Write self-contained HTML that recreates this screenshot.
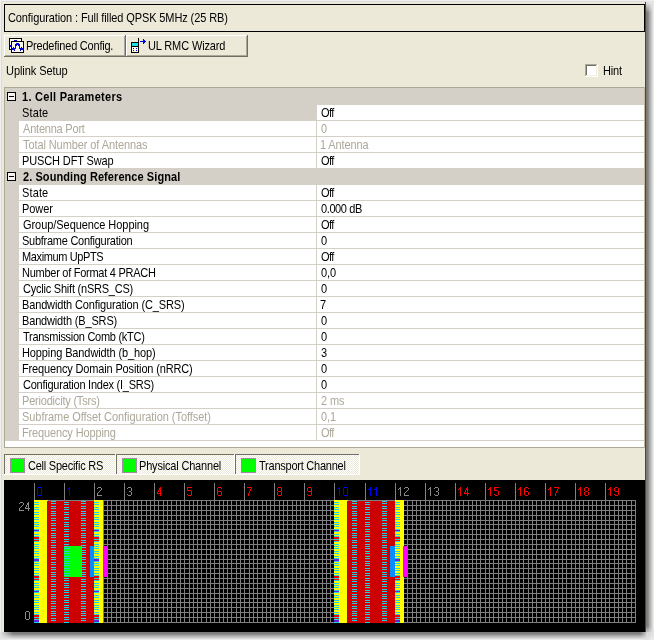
<!DOCTYPE html>
<html><head><meta charset="utf-8"><style>
html,body{margin:0;padding:0;width:654px;height:640px;overflow:hidden;position:relative;background:#fff}
.t{position:absolute;font-family:"Liberation Sans", sans-serif;font-size:11px;line-height:16px;white-space:nowrap;transform-origin:0 0;will-change:transform;transform:scaleY(1.09)}
</style></head><body>
<div style="position:absolute;left:0px;top:0px;width:654px;height:640px;background:#ffffff"></div><div style="position:absolute;left:0px;top:0px;width:646px;height:1px;background:#efefef"></div><div style="position:absolute;left:0px;top:1px;width:646px;height:1px;background:#dcdcdc"></div><div style="position:absolute;left:0px;top:0px;width:1px;height:632px;background:#efefef"></div><div style="position:absolute;left:1px;top:1px;width:1px;height:631px;background:#dcdcdc"></div><div style="position:absolute;left:2px;top:2px;width:643px;height:630px;background:#ece9d8"></div><div style="position:absolute;left:645px;top:2px;width:1px;height:630px;background:#0a46f0"></div><div style="position:absolute;left:646px;top:2px;width:1px;height:630px;background:#7c7a72"></div><div style="position:absolute;left:0px;top:632px;width:646px;height:1px;background:#7c7c7c"></div><div style="position:absolute;left:647px;top:2px;width:1px;height:630px;background:#808080"></div><div style="position:absolute;left:0px;top:633px;width:646px;height:1px;background:#808080"></div><div style="position:absolute;left:648px;top:2px;width:1px;height:630px;background:#8e8e8e"></div><div style="position:absolute;left:0px;top:634px;width:646px;height:1px;background:#8e8e8e"></div><div style="position:absolute;left:649px;top:2px;width:1px;height:630px;background:#a6a6a6"></div><div style="position:absolute;left:0px;top:635px;width:646px;height:1px;background:#a6a6a6"></div><div style="position:absolute;left:650px;top:2px;width:1px;height:630px;background:#b8b8b8"></div><div style="position:absolute;left:0px;top:636px;width:646px;height:1px;background:#b8b8b8"></div><div style="position:absolute;left:651px;top:2px;width:1px;height:630px;background:#c8c8c8"></div><div style="position:absolute;left:0px;top:637px;width:646px;height:1px;background:#c8c8c8"></div><div style="position:absolute;left:652px;top:2px;width:1px;height:630px;background:#dadada"></div><div style="position:absolute;left:0px;top:638px;width:646px;height:1px;background:#dadada"></div><div style="position:absolute;left:653px;top:2px;width:1px;height:630px;background:#ececec"></div><div style="position:absolute;left:0px;top:639px;width:646px;height:1px;background:#ececec"></div><div style="position:absolute;left:646px;top:2px;width:8px;height:11px;background:linear-gradient(to bottom,#e6e6e6,rgba(230,230,230,0))"></div><div style="position:absolute;left:0px;top:632px;width:13px;height:8px;background:linear-gradient(to right,#e6e6e6,rgba(230,230,230,0))"></div><div style="position:absolute;left:646px;top:626px;width:8px;height:6px;background:linear-gradient(to bottom,rgba(222,222,222,0),rgba(222,222,222,0.7))"></div><div style="position:absolute;left:640px;top:632px;width:6px;height:8px;background:linear-gradient(to right,rgba(222,222,222,0),rgba(222,222,222,0.7))"></div><div style="position:absolute;left:646px;top:632px;width:8px;height:8px;background:radial-gradient(circle at 0 0,#d4d4d4 0px,#e0e0e0 6px,#efefef 11px)"></div><div style="position:absolute;left:646px;top:0px;width:8px;height:1px;background:#eeeeee"></div><div style="position:absolute;left:646px;top:1px;width:8px;height:1px;background:#e4e4e4"></div><div style="position:absolute;left:4px;top:4px;width:641px;height:1px;background:#000"></div><div style="position:absolute;left:4px;top:31px;width:641px;height:1px;background:#000"></div><div style="position:absolute;left:4px;top:4px;width:1px;height:28px;background:#000"></div><div style="position:absolute;left:644px;top:4px;width:1px;height:28px;background:#000"></div><div class="t" style="left:8px;top:8.92px;color:#000;font-weight:normal;letter-spacing:-0.102px">Configuration : Full filled QPSK 5MHz (25 RB)</div><div style="position:absolute;left:4px;top:35px;width:122px;height:1px;background:#ffffff"></div><div style="position:absolute;left:4px;top:35px;width:1px;height:22px;background:#ffffff"></div><div style="position:absolute;left:4px;top:56px;width:122px;height:1px;background:#716f64"></div><div style="position:absolute;left:125px;top:35px;width:1px;height:22px;background:#716f64"></div><div style="position:absolute;left:5px;top:55px;width:120px;height:1px;background:#aca899"></div><div style="position:absolute;left:124px;top:36px;width:1px;height:20px;background:#aca899"></div><div style="position:absolute;left:126px;top:35px;width:122px;height:1px;background:#ffffff"></div><div style="position:absolute;left:126px;top:35px;width:1px;height:22px;background:#ffffff"></div><div style="position:absolute;left:126px;top:56px;width:122px;height:1px;background:#716f64"></div><div style="position:absolute;left:247px;top:35px;width:1px;height:22px;background:#716f64"></div><div style="position:absolute;left:127px;top:55px;width:120px;height:1px;background:#aca899"></div><div style="position:absolute;left:246px;top:36px;width:1px;height:20px;background:#aca899"></div><div class="t" style="left:26px;top:36.92px;color:#000;font-weight:normal;letter-spacing:-0.218px">Predefined Config.</div><div class="t" style="left:148px;top:36.92px;color:#000;font-weight:normal;letter-spacing:-0.133px">UL RMC Wizard</div><svg style="position:absolute;left:8px;top:37px" width="17" height="17" shape-rendering="crispEdges"><rect x="1" y="1" width="13" height="12" fill="#fbf7ea"/><rect x="1" y="1" width="13" height="1" fill="#000000"/><rect x="1" y="12" width="13" height="1" fill="#000000"/><rect x="1" y="1" width="1" height="12" fill="#000000"/><rect x="13" y="1" width="1" height="12" fill="#000000"/><rect x="6" y="3" width="1" height="1" fill="#0000e0"/><rect x="7" y="3" width="1" height="1" fill="#0000e0"/><rect x="8" y="3" width="1" height="1" fill="#0000e0"/><rect x="2" y="8" width="1" height="1" fill="#0000e0"/><rect x="2" y="9" width="1" height="1" fill="#0000e0"/><rect x="3" y="4" width="13" height="12" fill="#fbf7ea"/><rect x="3" y="4" width="13" height="1" fill="#000000"/><rect x="3" y="15" width="13" height="1" fill="#000000"/><rect x="3" y="4" width="1" height="12" fill="#000000"/><rect x="15" y="4" width="1" height="12" fill="#000000"/><rect x="8" y="6" width="1" height="1" fill="#0000e0"/><rect x="9" y="6" width="1" height="1" fill="#0000e0"/><rect x="10" y="6" width="1" height="1" fill="#0000e0"/><rect x="7" y="7" width="1" height="1" fill="#0000e0"/><rect x="8" y="7" width="1" height="1" fill="#0000e0"/><rect x="9" y="7" width="1" height="1" fill="#0000e0"/><rect x="10" y="7" width="1" height="1" fill="#0000e0"/><rect x="11" y="7" width="1" height="1" fill="#0000e0"/><rect x="7" y="8" width="1" height="1" fill="#0000e0"/><rect x="8" y="8" width="1" height="1" fill="#0000e0"/><rect x="10" y="8" width="1" height="1" fill="#0000e0"/><rect x="11" y="8" width="1" height="1" fill="#0000e0"/><rect x="7" y="9" width="1" height="1" fill="#0000e0"/><rect x="11" y="9" width="1" height="1" fill="#0000e0"/><rect x="7" y="10" width="1" height="1" fill="#0000e0"/><rect x="11" y="10" width="1" height="1" fill="#0000e0"/><rect x="5" y="10" width="1" height="1" fill="#0000e0"/><rect x="13" y="10" width="1" height="1" fill="#0000e0"/><rect x="4" y="11" width="1" height="1" fill="#0000e0"/><rect x="5" y="11" width="1" height="1" fill="#0000e0"/><rect x="6" y="11" width="1" height="1" fill="#0000e0"/><rect x="7" y="11" width="1" height="1" fill="#0000e0"/><rect x="11" y="11" width="1" height="1" fill="#0000e0"/><rect x="12" y="11" width="1" height="1" fill="#0000e0"/><rect x="13" y="11" width="1" height="1" fill="#0000e0"/><rect x="14" y="11" width="1" height="1" fill="#0000e0"/><rect x="4" y="12" width="1" height="1" fill="#0000e0"/><rect x="5" y="12" width="1" height="1" fill="#0000e0"/><rect x="6" y="12" width="1" height="1" fill="#0000e0"/><rect x="12" y="12" width="1" height="1" fill="#0000e0"/><rect x="13" y="12" width="1" height="1" fill="#0000e0"/><rect x="14" y="12" width="1" height="1" fill="#0000e0"/><rect x="6" y="13" width="1" height="1" fill="#0000e0"/><rect x="12" y="13" width="1" height="1" fill="#0000e0"/></svg><svg style="position:absolute;left:128px;top:36px" width="20" height="20" shape-rendering="crispEdges"><rect x="3" y="6" width="8" height="11" fill="#000000"/><rect x="4" y="7" width="6" height="3" fill="#1ce0e0"/><rect x="4" y="11" width="6" height="5" fill="#fbf7ea"/><rect x="5" y="12" width="1" height="1" fill="#0000e0"/><rect x="8" y="12" width="1" height="1" fill="#0000e0"/><rect x="5" y="14" width="1" height="1" fill="#0000e0"/><rect x="8" y="14" width="1" height="1" fill="#0000e0"/><rect x="10" y="2" width="1" height="4" fill="#000000"/><rect x="12" y="5" width="5" height="1" fill="#0000e0"/><rect x="15" y="3" width="1" height="1" fill="#0000e0"/><rect x="15" y="4" width="1" height="1" fill="#0000e0"/><rect x="16" y="4" width="1" height="1" fill="#0000e0"/><rect x="15" y="5" width="1" height="1" fill="#0000e0"/><rect x="16" y="5" width="1" height="1" fill="#0000e0"/><rect x="17" y="5" width="1" height="1" fill="#0000e0"/><rect x="15" y="6" width="1" height="1" fill="#0000e0"/><rect x="16" y="6" width="1" height="1" fill="#0000e0"/><rect x="15" y="7" width="1" height="1" fill="#0000e0"/><rect x="14" y="5" width="1" height="1" fill="#0000e0"/></svg><div class="t" style="left:6px;top:61.92px;color:#000;font-weight:normal;letter-spacing:-0.064px">Uplink Setup</div><div style="position:absolute;left:585px;top:64px;width:13px;height:13px;background:#ffffff"></div><div style="position:absolute;left:585px;top:64px;width:12px;height:1px;background:#aca899"></div><div style="position:absolute;left:585px;top:64px;width:1px;height:12px;background:#aca899"></div><div style="position:absolute;left:586px;top:65px;width:10px;height:1px;background:#716f64"></div><div style="position:absolute;left:586px;top:65px;width:1px;height:10px;background:#716f64"></div><div style="position:absolute;left:586px;top:75px;width:11px;height:1px;background:#f1efe2"></div><div style="position:absolute;left:596px;top:65px;width:1px;height:11px;background:#f1efe2"></div><div class="t" style="left:603px;top:61.92px;color:#000;font-weight:normal;letter-spacing:-0.200px">Hint</div><div style="position:absolute;left:4px;top:87px;width:641px;height:361px;background:#ffffff"></div><div style="position:absolute;left:4px;top:87px;width:641px;height:1px;background:#aca899"></div><div style="position:absolute;left:4px;top:87px;width:1px;height:361px;background:#aca899"></div><div style="position:absolute;left:4px;top:447px;width:641px;height:1px;background:#aca899"></div><div style="position:absolute;left:644px;top:87px;width:1px;height:361px;background:#c4b99c"></div><div style="position:absolute;left:5px;top:88px;width:639px;height:17px;background:#d4d0c8"></div><svg style="position:absolute;left:7px;top:92px" width="9" height="9" shape-rendering="crispEdges"><rect x="0" y="0" width="9" height="9" fill="#000"/><rect x="1" y="1" width="7" height="7" fill="#f4f3ee"/><rect x="2" y="4" width="5" height="1" fill="#000"/></svg><div class="t" style="left:22px;top:87.92px;color:#000;font-weight:bold;letter-spacing:0.276px">1. Cell Parameters</div><div style="position:absolute;left:5px;top:104px;width:14px;height:16px;background:#d4d0c8"></div><div style="position:absolute;left:19px;top:104px;width:625px;height:1px;background:#d4d0c8"></div><div style="position:absolute;left:19px;top:105px;width:297px;height:15px;background:#d4d0c8"></div><div style="position:absolute;left:316px;top:105px;width:1px;height:15px;background:#d4d0c8"></div><div class="t" style="left:22px;top:103.92px;color:#000;font-weight:normal;letter-spacing:0.125px">State</div><div class="t" style="left:321px;top:103.92px;color:#000;font-weight:normal;letter-spacing:-0.550px">Off</div><div style="position:absolute;left:5px;top:120px;width:14px;height:16px;background:#d4d0c8"></div><div style="position:absolute;left:19px;top:120px;width:625px;height:1px;background:#d4d0c8"></div><div style="position:absolute;left:316px;top:121px;width:1px;height:15px;background:#d4d0c8"></div><div class="t" style="left:23px;top:119.92px;color:#aca899;font-weight:normal;letter-spacing:-0.209px">Antenna Port</div><div class="t" style="left:321px;top:119.92px;color:#aca899;font-weight:normal;letter-spacing:-0.100px">0</div><div style="position:absolute;left:5px;top:136px;width:14px;height:16px;background:#d4d0c8"></div><div style="position:absolute;left:19px;top:136px;width:625px;height:1px;background:#d4d0c8"></div><div style="position:absolute;left:316px;top:137px;width:1px;height:15px;background:#d4d0c8"></div><div class="t" style="left:23px;top:135.92px;color:#aca899;font-weight:normal;letter-spacing:-0.091px">Total Number of Antennas</div><div class="t" style="left:320px;top:135.92px;color:#aca899;font-weight:normal;letter-spacing:-0.112px">1 Antenna</div><div style="position:absolute;left:5px;top:152px;width:14px;height:16px;background:#d4d0c8"></div><div style="position:absolute;left:19px;top:152px;width:625px;height:1px;background:#d4d0c8"></div><div style="position:absolute;left:316px;top:153px;width:1px;height:15px;background:#d4d0c8"></div><div class="t" style="left:22px;top:151.92px;color:#000;font-weight:normal;letter-spacing:-0.123px">PUSCH DFT Swap</div><div class="t" style="left:321px;top:151.92px;color:#000;font-weight:normal;letter-spacing:-0.550px">Off</div><div style="position:absolute;left:5px;top:168px;width:639px;height:17px;background:#d4d0c8"></div><svg style="position:absolute;left:7px;top:172px" width="9" height="9" shape-rendering="crispEdges"><rect x="0" y="0" width="9" height="9" fill="#000"/><rect x="1" y="1" width="7" height="7" fill="#f4f3ee"/><rect x="2" y="4" width="5" height="1" fill="#000"/></svg><div class="t" style="left:23px;top:167.92px;color:#000;font-weight:bold;letter-spacing:0.074px">2. Sounding Reference Signal</div><div style="position:absolute;left:5px;top:184px;width:14px;height:16px;background:#d4d0c8"></div><div style="position:absolute;left:19px;top:184px;width:625px;height:1px;background:#d4d0c8"></div><div style="position:absolute;left:316px;top:185px;width:1px;height:15px;background:#d4d0c8"></div><div class="t" style="left:22px;top:183.92px;color:#000;font-weight:normal;letter-spacing:0.125px">State</div><div class="t" style="left:321px;top:183.92px;color:#000;font-weight:normal;letter-spacing:-0.550px">Off</div><div style="position:absolute;left:5px;top:200px;width:14px;height:16px;background:#d4d0c8"></div><div style="position:absolute;left:19px;top:200px;width:625px;height:1px;background:#d4d0c8"></div><div style="position:absolute;left:316px;top:201px;width:1px;height:15px;background:#d4d0c8"></div><div class="t" style="left:22px;top:199.92px;color:#000;font-weight:normal;letter-spacing:-0.075px">Power</div><div class="t" style="left:321px;top:199.92px;color:#000;font-weight:normal;letter-spacing:-0.393px">0.000 dB</div><div style="position:absolute;left:5px;top:216px;width:14px;height:16px;background:#d4d0c8"></div><div style="position:absolute;left:19px;top:216px;width:625px;height:1px;background:#d4d0c8"></div><div style="position:absolute;left:316px;top:217px;width:1px;height:15px;background:#d4d0c8"></div><div class="t" style="left:23px;top:215.92px;color:#000;font-weight:normal;letter-spacing:-0.057px">Group/Sequence Hopping</div><div class="t" style="left:321px;top:215.92px;color:#000;font-weight:normal;letter-spacing:-0.550px">Off</div><div style="position:absolute;left:5px;top:232px;width:14px;height:16px;background:#d4d0c8"></div><div style="position:absolute;left:19px;top:232px;width:625px;height:1px;background:#d4d0c8"></div><div style="position:absolute;left:316px;top:233px;width:1px;height:15px;background:#d4d0c8"></div><div class="t" style="left:22px;top:231.92px;color:#000;font-weight:normal;letter-spacing:-0.262px">Subframe Configuration</div><div class="t" style="left:321px;top:231.92px;color:#000;font-weight:normal;letter-spacing:-0.100px">0</div><div style="position:absolute;left:5px;top:248px;width:14px;height:16px;background:#d4d0c8"></div><div style="position:absolute;left:19px;top:248px;width:625px;height:1px;background:#d4d0c8"></div><div style="position:absolute;left:316px;top:249px;width:1px;height:15px;background:#d4d0c8"></div><div class="t" style="left:22px;top:247.92px;color:#000;font-weight:normal;letter-spacing:-0.375px">Maximum UpPTS</div><div class="t" style="left:321px;top:247.92px;color:#000;font-weight:normal;letter-spacing:-0.550px">Off</div><div style="position:absolute;left:5px;top:264px;width:14px;height:16px;background:#d4d0c8"></div><div style="position:absolute;left:19px;top:264px;width:625px;height:1px;background:#d4d0c8"></div><div style="position:absolute;left:316px;top:265px;width:1px;height:15px;background:#d4d0c8"></div><div class="t" style="left:22px;top:263.92px;color:#000;font-weight:normal;letter-spacing:-0.265px">Number of Format 4 PRACH</div><div class="t" style="left:321px;top:263.92px;color:#000;font-weight:normal;letter-spacing:-0.100px">0,0</div><div style="position:absolute;left:5px;top:280px;width:14px;height:16px;background:#d4d0c8"></div><div style="position:absolute;left:19px;top:280px;width:625px;height:1px;background:#d4d0c8"></div><div style="position:absolute;left:316px;top:281px;width:1px;height:15px;background:#d4d0c8"></div><div class="t" style="left:23px;top:279.92px;color:#000;font-weight:normal;letter-spacing:-0.224px">Cyclic Shift (nSRS_CS)</div><div class="t" style="left:321px;top:279.92px;color:#000;font-weight:normal;letter-spacing:-0.100px">0</div><div style="position:absolute;left:5px;top:296px;width:14px;height:16px;background:#d4d0c8"></div><div style="position:absolute;left:19px;top:296px;width:625px;height:1px;background:#d4d0c8"></div><div style="position:absolute;left:316px;top:297px;width:1px;height:15px;background:#d4d0c8"></div><div class="t" style="left:22px;top:295.92px;color:#000;font-weight:normal;letter-spacing:-0.143px">Bandwidth Configuration (C_SRS)</div><div class="t" style="left:320px;top:295.92px;color:#000;font-weight:normal;letter-spacing:-0.100px">7</div><div style="position:absolute;left:5px;top:312px;width:14px;height:16px;background:#d4d0c8"></div><div style="position:absolute;left:19px;top:312px;width:625px;height:1px;background:#d4d0c8"></div><div style="position:absolute;left:316px;top:313px;width:1px;height:15px;background:#d4d0c8"></div><div class="t" style="left:22px;top:311.92px;color:#000;font-weight:normal;letter-spacing:-0.162px">Bandwidth (B_SRS)</div><div class="t" style="left:321px;top:311.92px;color:#000;font-weight:normal;letter-spacing:-0.100px">0</div><div style="position:absolute;left:5px;top:328px;width:14px;height:16px;background:#d4d0c8"></div><div style="position:absolute;left:19px;top:328px;width:625px;height:1px;background:#d4d0c8"></div><div style="position:absolute;left:316px;top:329px;width:1px;height:15px;background:#d4d0c8"></div><div class="t" style="left:23px;top:327.92px;color:#000;font-weight:normal;letter-spacing:-0.277px">Transmission Comb (kTC)</div><div class="t" style="left:321px;top:327.92px;color:#000;font-weight:normal;letter-spacing:-0.100px">0</div><div style="position:absolute;left:5px;top:344px;width:14px;height:16px;background:#d4d0c8"></div><div style="position:absolute;left:19px;top:344px;width:625px;height:1px;background:#d4d0c8"></div><div style="position:absolute;left:316px;top:345px;width:1px;height:15px;background:#d4d0c8"></div><div class="t" style="left:22px;top:343.92px;color:#000;font-weight:normal;letter-spacing:-0.112px">Hopping Bandwidth (b_hop)</div><div class="t" style="left:321px;top:343.92px;color:#000;font-weight:normal;letter-spacing:-0.100px">3</div><div style="position:absolute;left:5px;top:360px;width:14px;height:16px;background:#d4d0c8"></div><div style="position:absolute;left:19px;top:360px;width:625px;height:1px;background:#d4d0c8"></div><div style="position:absolute;left:316px;top:361px;width:1px;height:15px;background:#d4d0c8"></div><div class="t" style="left:22px;top:359.92px;color:#000;font-weight:normal;letter-spacing:-0.152px">Frequency Domain Position (nRRC)</div><div class="t" style="left:321px;top:359.92px;color:#000;font-weight:normal;letter-spacing:-0.100px">0</div><div style="position:absolute;left:5px;top:376px;width:14px;height:16px;background:#d4d0c8"></div><div style="position:absolute;left:19px;top:376px;width:625px;height:1px;background:#d4d0c8"></div><div style="position:absolute;left:316px;top:377px;width:1px;height:15px;background:#d4d0c8"></div><div class="t" style="left:23px;top:375.92px;color:#000;font-weight:normal;letter-spacing:-0.242px">Configuration Index (I_SRS)</div><div class="t" style="left:321px;top:375.92px;color:#000;font-weight:normal;letter-spacing:-0.100px">0</div><div style="position:absolute;left:5px;top:392px;width:14px;height:16px;background:#d4d0c8"></div><div style="position:absolute;left:19px;top:392px;width:625px;height:1px;background:#d4d0c8"></div><div style="position:absolute;left:316px;top:393px;width:1px;height:15px;background:#d4d0c8"></div><div class="t" style="left:22px;top:391.92px;color:#aca899;font-weight:normal;letter-spacing:-0.200px">Periodicity (Tsrs)</div><div class="t" style="left:321px;top:391.92px;color:#aca899;font-weight:normal;letter-spacing:-0.100px">2 ms</div><div style="position:absolute;left:5px;top:408px;width:14px;height:16px;background:#d4d0c8"></div><div style="position:absolute;left:19px;top:408px;width:625px;height:1px;background:#d4d0c8"></div><div style="position:absolute;left:316px;top:409px;width:1px;height:15px;background:#d4d0c8"></div><div class="t" style="left:22px;top:407.92px;color:#aca899;font-weight:normal;letter-spacing:-0.053px">Subframe Offset Configuration (Toffset)</div><div class="t" style="left:321px;top:407.92px;color:#aca899;font-weight:normal;letter-spacing:-0.100px">0,1</div><div style="position:absolute;left:5px;top:424px;width:14px;height:16px;background:#d4d0c8"></div><div style="position:absolute;left:19px;top:424px;width:625px;height:1px;background:#d4d0c8"></div><div style="position:absolute;left:316px;top:425px;width:1px;height:15px;background:#d4d0c8"></div><div class="t" style="left:22px;top:423.92px;color:#aca899;font-weight:normal;letter-spacing:-0.138px">Frequency Hopping</div><div class="t" style="left:321px;top:423.92px;color:#aca899;font-weight:normal;letter-spacing:-0.550px">Off</div><div style="position:absolute;left:5px;top:440px;width:639px;height:1px;background:#d4d0c8"></div><div style="position:absolute;left:4px;top:454px;width:112px;height:21px;background-color:#ffffff;background-image:repeating-conic-gradient(#ece9d8 0 25%, #ffffff 0 50%);background-size:2px 2px"></div><div style="position:absolute;left:4px;top:454px;width:112px;height:1px;background:#716f64"></div><div style="position:absolute;left:4px;top:454px;width:1px;height:21px;background:#716f64"></div><div style="position:absolute;left:4px;top:474px;width:112px;height:1px;background:#ffffff"></div><div style="position:absolute;left:115px;top:454px;width:1px;height:21px;background:#ffffff"></div><div style="position:absolute;left:10px;top:458px;width:15px;height:15px;background:#a08ca0"></div><div style="position:absolute;left:11px;top:459px;width:13px;height:13px;background:#00ff00"></div><div class="t" style="left:28px;top:456.92px;color:#000;font-weight:normal;letter-spacing:-0.240px">Cell Specific RS</div><div style="position:absolute;left:116px;top:454px;width:119px;height:21px;background-color:#ffffff;background-image:repeating-conic-gradient(#ece9d8 0 25%, #ffffff 0 50%);background-size:2px 2px"></div><div style="position:absolute;left:116px;top:454px;width:119px;height:1px;background:#716f64"></div><div style="position:absolute;left:116px;top:454px;width:1px;height:21px;background:#716f64"></div><div style="position:absolute;left:116px;top:474px;width:119px;height:1px;background:#ffffff"></div><div style="position:absolute;left:234px;top:454px;width:1px;height:21px;background:#ffffff"></div><div style="position:absolute;left:122px;top:458px;width:15px;height:15px;background:#a08ca0"></div><div style="position:absolute;left:123px;top:459px;width:13px;height:13px;background:#00ff00"></div><div class="t" style="left:139px;top:456.92px;color:#000;font-weight:normal;letter-spacing:-0.180px">Physical Channel</div><div style="position:absolute;left:235px;top:454px;width:125px;height:21px;background-color:#ffffff;background-image:repeating-conic-gradient(#ece9d8 0 25%, #ffffff 0 50%);background-size:2px 2px"></div><div style="position:absolute;left:235px;top:454px;width:125px;height:1px;background:#716f64"></div><div style="position:absolute;left:235px;top:454px;width:1px;height:21px;background:#716f64"></div><div style="position:absolute;left:235px;top:474px;width:125px;height:1px;background:#ffffff"></div><div style="position:absolute;left:359px;top:454px;width:1px;height:21px;background:#ffffff"></div><div style="position:absolute;left:241px;top:458px;width:15px;height:15px;background:#a08ca0"></div><div style="position:absolute;left:242px;top:459px;width:13px;height:13px;background:#00ff00"></div><div class="t" style="left:259px;top:456.92px;color:#000;font-weight:normal;letter-spacing:-0.237px">Transport Channel</div><div style="position:absolute;left:4px;top:480px;width:641px;height:152px;background:#000000"></div><svg style="position:absolute;left:0;top:0" width="654" height="640" shape-rendering="crispEdges"><rect x="34" y="500" width="1" height="123" fill="#808080"/><rect x="38" y="500" width="1" height="123" fill="#808080"/><rect x="43" y="500" width="1" height="123" fill="#808080"/><rect x="47" y="500" width="1" height="123" fill="#808080"/><rect x="51" y="500" width="1" height="123" fill="#808080"/><rect x="55" y="500" width="1" height="123" fill="#808080"/><rect x="60" y="500" width="1" height="123" fill="#808080"/><rect x="64" y="500" width="1" height="123" fill="#808080"/><rect x="68" y="500" width="1" height="123" fill="#808080"/><rect x="73" y="500" width="1" height="123" fill="#808080"/><rect x="77" y="500" width="1" height="123" fill="#808080"/><rect x="81" y="500" width="1" height="123" fill="#808080"/><rect x="86" y="500" width="1" height="123" fill="#808080"/><rect x="90" y="500" width="1" height="123" fill="#808080"/><rect x="94" y="500" width="1" height="123" fill="#808080"/><rect x="98" y="500" width="1" height="123" fill="#808080"/><rect x="103" y="500" width="1" height="123" fill="#808080"/><rect x="107" y="500" width="1" height="123" fill="#808080"/><rect x="111" y="500" width="1" height="123" fill="#808080"/><rect x="116" y="500" width="1" height="123" fill="#808080"/><rect x="120" y="500" width="1" height="123" fill="#808080"/><rect x="124" y="500" width="1" height="123" fill="#808080"/><rect x="128" y="500" width="1" height="123" fill="#808080"/><rect x="133" y="500" width="1" height="123" fill="#808080"/><rect x="137" y="500" width="1" height="123" fill="#808080"/><rect x="141" y="500" width="1" height="123" fill="#808080"/><rect x="146" y="500" width="1" height="123" fill="#808080"/><rect x="150" y="500" width="1" height="123" fill="#808080"/><rect x="154" y="500" width="1" height="123" fill="#808080"/><rect x="158" y="500" width="1" height="123" fill="#808080"/><rect x="163" y="500" width="1" height="123" fill="#808080"/><rect x="167" y="500" width="1" height="123" fill="#808080"/><rect x="171" y="500" width="1" height="123" fill="#808080"/><rect x="176" y="500" width="1" height="123" fill="#808080"/><rect x="180" y="500" width="1" height="123" fill="#808080"/><rect x="184" y="500" width="1" height="123" fill="#808080"/><rect x="189" y="500" width="1" height="123" fill="#808080"/><rect x="193" y="500" width="1" height="123" fill="#808080"/><rect x="197" y="500" width="1" height="123" fill="#808080"/><rect x="201" y="500" width="1" height="123" fill="#808080"/><rect x="206" y="500" width="1" height="123" fill="#808080"/><rect x="210" y="500" width="1" height="123" fill="#808080"/><rect x="214" y="500" width="1" height="123" fill="#808080"/><rect x="219" y="500" width="1" height="123" fill="#808080"/><rect x="223" y="500" width="1" height="123" fill="#808080"/><rect x="227" y="500" width="1" height="123" fill="#808080"/><rect x="231" y="500" width="1" height="123" fill="#808080"/><rect x="236" y="500" width="1" height="123" fill="#808080"/><rect x="240" y="500" width="1" height="123" fill="#808080"/><rect x="244" y="500" width="1" height="123" fill="#808080"/><rect x="249" y="500" width="1" height="123" fill="#808080"/><rect x="253" y="500" width="1" height="123" fill="#808080"/><rect x="257" y="500" width="1" height="123" fill="#808080"/><rect x="262" y="500" width="1" height="123" fill="#808080"/><rect x="266" y="500" width="1" height="123" fill="#808080"/><rect x="270" y="500" width="1" height="123" fill="#808080"/><rect x="274" y="500" width="1" height="123" fill="#808080"/><rect x="279" y="500" width="1" height="123" fill="#808080"/><rect x="283" y="500" width="1" height="123" fill="#808080"/><rect x="287" y="500" width="1" height="123" fill="#808080"/><rect x="292" y="500" width="1" height="123" fill="#808080"/><rect x="296" y="500" width="1" height="123" fill="#808080"/><rect x="300" y="500" width="1" height="123" fill="#808080"/><rect x="304" y="500" width="1" height="123" fill="#808080"/><rect x="309" y="500" width="1" height="123" fill="#808080"/><rect x="313" y="500" width="1" height="123" fill="#808080"/><rect x="317" y="500" width="1" height="123" fill="#808080"/><rect x="322" y="500" width="1" height="123" fill="#808080"/><rect x="326" y="500" width="1" height="123" fill="#808080"/><rect x="330" y="500" width="1" height="123" fill="#808080"/><rect x="334" y="500" width="1" height="123" fill="#808080"/><rect x="339" y="500" width="1" height="123" fill="#808080"/><rect x="343" y="500" width="1" height="123" fill="#808080"/><rect x="347" y="500" width="1" height="123" fill="#808080"/><rect x="352" y="500" width="1" height="123" fill="#808080"/><rect x="356" y="500" width="1" height="123" fill="#808080"/><rect x="360" y="500" width="1" height="123" fill="#808080"/><rect x="365" y="500" width="1" height="123" fill="#808080"/><rect x="369" y="500" width="1" height="123" fill="#808080"/><rect x="373" y="500" width="1" height="123" fill="#808080"/><rect x="377" y="500" width="1" height="123" fill="#808080"/><rect x="382" y="500" width="1" height="123" fill="#808080"/><rect x="386" y="500" width="1" height="123" fill="#808080"/><rect x="390" y="500" width="1" height="123" fill="#808080"/><rect x="395" y="500" width="1" height="123" fill="#808080"/><rect x="399" y="500" width="1" height="123" fill="#808080"/><rect x="403" y="500" width="1" height="123" fill="#808080"/><rect x="407" y="500" width="1" height="123" fill="#808080"/><rect x="412" y="500" width="1" height="123" fill="#808080"/><rect x="416" y="500" width="1" height="123" fill="#808080"/><rect x="420" y="500" width="1" height="123" fill="#808080"/><rect x="425" y="500" width="1" height="123" fill="#808080"/><rect x="429" y="500" width="1" height="123" fill="#808080"/><rect x="433" y="500" width="1" height="123" fill="#808080"/><rect x="438" y="500" width="1" height="123" fill="#808080"/><rect x="442" y="500" width="1" height="123" fill="#808080"/><rect x="446" y="500" width="1" height="123" fill="#808080"/><rect x="450" y="500" width="1" height="123" fill="#808080"/><rect x="455" y="500" width="1" height="123" fill="#808080"/><rect x="459" y="500" width="1" height="123" fill="#808080"/><rect x="463" y="500" width="1" height="123" fill="#808080"/><rect x="468" y="500" width="1" height="123" fill="#808080"/><rect x="472" y="500" width="1" height="123" fill="#808080"/><rect x="476" y="500" width="1" height="123" fill="#808080"/><rect x="480" y="500" width="1" height="123" fill="#808080"/><rect x="485" y="500" width="1" height="123" fill="#808080"/><rect x="489" y="500" width="1" height="123" fill="#808080"/><rect x="493" y="500" width="1" height="123" fill="#808080"/><rect x="498" y="500" width="1" height="123" fill="#808080"/><rect x="502" y="500" width="1" height="123" fill="#808080"/><rect x="506" y="500" width="1" height="123" fill="#808080"/><rect x="511" y="500" width="1" height="123" fill="#808080"/><rect x="515" y="500" width="1" height="123" fill="#808080"/><rect x="519" y="500" width="1" height="123" fill="#808080"/><rect x="523" y="500" width="1" height="123" fill="#808080"/><rect x="528" y="500" width="1" height="123" fill="#808080"/><rect x="532" y="500" width="1" height="123" fill="#808080"/><rect x="536" y="500" width="1" height="123" fill="#808080"/><rect x="541" y="500" width="1" height="123" fill="#808080"/><rect x="545" y="500" width="1" height="123" fill="#808080"/><rect x="549" y="500" width="1" height="123" fill="#808080"/><rect x="553" y="500" width="1" height="123" fill="#808080"/><rect x="558" y="500" width="1" height="123" fill="#808080"/><rect x="562" y="500" width="1" height="123" fill="#808080"/><rect x="566" y="500" width="1" height="123" fill="#808080"/><rect x="571" y="500" width="1" height="123" fill="#808080"/><rect x="575" y="500" width="1" height="123" fill="#808080"/><rect x="579" y="500" width="1" height="123" fill="#808080"/><rect x="583" y="500" width="1" height="123" fill="#808080"/><rect x="588" y="500" width="1" height="123" fill="#808080"/><rect x="592" y="500" width="1" height="123" fill="#808080"/><rect x="596" y="500" width="1" height="123" fill="#808080"/><rect x="601" y="500" width="1" height="123" fill="#808080"/><rect x="605" y="500" width="1" height="123" fill="#808080"/><rect x="609" y="500" width="1" height="123" fill="#808080"/><rect x="614" y="500" width="1" height="123" fill="#808080"/><rect x="618" y="500" width="1" height="123" fill="#808080"/><rect x="622" y="500" width="1" height="123" fill="#808080"/><rect x="626" y="500" width="1" height="123" fill="#808080"/><rect x="631" y="500" width="1" height="123" fill="#808080"/><rect x="635" y="500" width="1" height="123" fill="#808080"/><rect x="34" y="500" width="602" height="1" fill="#808080"/><rect x="34" y="505" width="602" height="1" fill="#808080"/><rect x="34" y="510" width="602" height="1" fill="#808080"/><rect x="34" y="515" width="602" height="1" fill="#808080"/><rect x="34" y="520" width="602" height="1" fill="#808080"/><rect x="34" y="524" width="602" height="1" fill="#808080"/><rect x="34" y="529" width="602" height="1" fill="#808080"/><rect x="34" y="534" width="602" height="1" fill="#808080"/><rect x="34" y="539" width="602" height="1" fill="#808080"/><rect x="34" y="544" width="602" height="1" fill="#808080"/><rect x="34" y="549" width="602" height="1" fill="#808080"/><rect x="34" y="554" width="602" height="1" fill="#808080"/><rect x="34" y="559" width="602" height="1" fill="#808080"/><rect x="34" y="563" width="602" height="1" fill="#808080"/><rect x="34" y="568" width="602" height="1" fill="#808080"/><rect x="34" y="573" width="602" height="1" fill="#808080"/><rect x="34" y="578" width="602" height="1" fill="#808080"/><rect x="34" y="583" width="602" height="1" fill="#808080"/><rect x="34" y="588" width="602" height="1" fill="#808080"/><rect x="34" y="593" width="602" height="1" fill="#808080"/><rect x="34" y="598" width="602" height="1" fill="#808080"/><rect x="34" y="602" width="602" height="1" fill="#808080"/><rect x="34" y="607" width="602" height="1" fill="#808080"/><rect x="34" y="612" width="602" height="1" fill="#808080"/><rect x="34" y="617" width="602" height="1" fill="#808080"/><rect x="34" y="622" width="602" height="1" fill="#808080"/><rect x="34" y="483" width="1" height="17" fill="#808080"/><rect x="64" y="483" width="1" height="17" fill="#808080"/><rect x="94" y="483" width="1" height="17" fill="#808080"/><rect x="124" y="483" width="1" height="17" fill="#808080"/><rect x="154" y="483" width="1" height="17" fill="#808080"/><rect x="184" y="483" width="1" height="17" fill="#808080"/><rect x="214" y="483" width="1" height="17" fill="#808080"/><rect x="244" y="483" width="1" height="17" fill="#808080"/><rect x="274" y="483" width="1" height="17" fill="#808080"/><rect x="304" y="483" width="1" height="17" fill="#808080"/><rect x="334" y="483" width="1" height="17" fill="#808080"/><rect x="365" y="483" width="1" height="17" fill="#808080"/><rect x="395" y="483" width="1" height="17" fill="#808080"/><rect x="425" y="483" width="1" height="17" fill="#808080"/><rect x="455" y="483" width="1" height="17" fill="#808080"/><rect x="485" y="483" width="1" height="17" fill="#808080"/><rect x="515" y="483" width="1" height="17" fill="#808080"/><rect x="545" y="483" width="1" height="17" fill="#808080"/><rect x="575" y="483" width="1" height="17" fill="#808080"/><rect x="605" y="483" width="1" height="17" fill="#808080"/><rect x="34" y="500" width="14" height="123" fill="#ffff00"/><rect x="47" y="501" width="48" height="122" fill="#cc0000"/><rect x="94" y="500" width="9" height="123" fill="#ffff00"/><rect x="64" y="546" width="18" height="31" fill="#00ff00"/><rect x="90" y="546" width="5" height="31" fill="#0a8cff"/><rect x="94" y="500" width="9" height="123" fill="#ffff00"/><rect x="103" y="546" width="5" height="31" fill="#ff00ff"/><rect x="34" y="529" width="5" height="1" fill="#6a1fd8"/><rect x="34" y="530" width="5" height="1" fill="#6a1fd8"/><rect x="34" y="530" width="5" height="1" fill="#6a1fd8"/><rect x="34" y="531" width="5" height="1" fill="#6a1fd8"/><rect x="34" y="559" width="5" height="1" fill="#6a1fd8"/><rect x="34" y="559" width="5" height="1" fill="#6a1fd8"/><rect x="34" y="560" width="5" height="1" fill="#6a1fd8"/><rect x="34" y="560" width="5" height="1" fill="#6a1fd8"/><rect x="34" y="590" width="5" height="1" fill="#6a1fd8"/><rect x="34" y="591" width="5" height="1" fill="#6a1fd8"/><rect x="34" y="592" width="5" height="1" fill="#6a1fd8"/><rect x="34" y="592" width="5" height="1" fill="#6a1fd8"/><rect x="34" y="620" width="5" height="1" fill="#6a1fd8"/><rect x="34" y="620" width="5" height="1" fill="#6a1fd8"/><rect x="34" y="621" width="5" height="1" fill="#6a1fd8"/><rect x="34" y="621" width="5" height="1" fill="#6a1fd8"/><rect x="34" y="537" width="5" height="1" fill="#ff0000"/><rect x="34" y="537" width="5" height="1" fill="#ff0000"/><rect x="34" y="538" width="5" height="1" fill="#ff0000"/><rect x="34" y="538" width="5" height="1" fill="#ff0000"/><rect x="34" y="539" width="5" height="1" fill="#ff0000"/><rect x="34" y="539" width="5" height="1" fill="#ff0000"/><rect x="34" y="540" width="5" height="1" fill="#ff0000"/><rect x="34" y="541" width="5" height="1" fill="#ff0000"/><rect x="34" y="576" width="5" height="1" fill="#ff0000"/><rect x="34" y="576" width="5" height="1" fill="#ff0000"/><rect x="34" y="577" width="5" height="1" fill="#ff0000"/><rect x="34" y="577" width="5" height="1" fill="#ff0000"/><rect x="34" y="578" width="5" height="1" fill="#ff0000"/><rect x="34" y="578" width="5" height="1" fill="#ff0000"/><rect x="34" y="579" width="5" height="1" fill="#ff0000"/><rect x="34" y="580" width="5" height="1" fill="#ff0000"/><rect x="34" y="615" width="5" height="1" fill="#ff0000"/><rect x="34" y="615" width="5" height="1" fill="#ff0000"/><rect x="34" y="616" width="5" height="1" fill="#ff0000"/><rect x="34" y="616" width="5" height="1" fill="#ff0000"/><rect x="34" y="617" width="5" height="1" fill="#ff0000"/><rect x="34" y="618" width="5" height="1" fill="#ff0000"/><rect x="34" y="618" width="5" height="1" fill="#ff0000"/><rect x="34" y="619" width="5" height="1" fill="#ff0000"/><rect x="94" y="529" width="5" height="1" fill="#6a1fd8"/><rect x="94" y="530" width="5" height="1" fill="#6a1fd8"/><rect x="94" y="530" width="5" height="1" fill="#6a1fd8"/><rect x="94" y="531" width="5" height="1" fill="#6a1fd8"/><rect x="94" y="559" width="5" height="1" fill="#6a1fd8"/><rect x="94" y="559" width="5" height="1" fill="#6a1fd8"/><rect x="94" y="560" width="5" height="1" fill="#6a1fd8"/><rect x="94" y="560" width="5" height="1" fill="#6a1fd8"/><rect x="94" y="590" width="5" height="1" fill="#6a1fd8"/><rect x="94" y="591" width="5" height="1" fill="#6a1fd8"/><rect x="94" y="592" width="5" height="1" fill="#6a1fd8"/><rect x="94" y="592" width="5" height="1" fill="#6a1fd8"/><rect x="94" y="620" width="5" height="1" fill="#6a1fd8"/><rect x="94" y="620" width="5" height="1" fill="#6a1fd8"/><rect x="94" y="621" width="5" height="1" fill="#6a1fd8"/><rect x="94" y="621" width="5" height="1" fill="#6a1fd8"/><rect x="94" y="537" width="5" height="1" fill="#ff0000"/><rect x="94" y="537" width="5" height="1" fill="#ff0000"/><rect x="94" y="538" width="5" height="1" fill="#ff0000"/><rect x="94" y="538" width="5" height="1" fill="#ff0000"/><rect x="94" y="539" width="5" height="1" fill="#ff0000"/><rect x="94" y="539" width="5" height="1" fill="#ff0000"/><rect x="94" y="540" width="5" height="1" fill="#ff0000"/><rect x="94" y="541" width="5" height="1" fill="#ff0000"/><rect x="94" y="576" width="5" height="1" fill="#ff0000"/><rect x="94" y="576" width="5" height="1" fill="#ff0000"/><rect x="94" y="577" width="5" height="1" fill="#ff0000"/><rect x="94" y="577" width="5" height="1" fill="#ff0000"/><rect x="94" y="578" width="5" height="1" fill="#ff0000"/><rect x="94" y="578" width="5" height="1" fill="#ff0000"/><rect x="94" y="579" width="5" height="1" fill="#ff0000"/><rect x="94" y="580" width="5" height="1" fill="#ff0000"/><rect x="94" y="615" width="5" height="1" fill="#ff0000"/><rect x="94" y="615" width="5" height="1" fill="#ff0000"/><rect x="94" y="616" width="5" height="1" fill="#ff0000"/><rect x="94" y="616" width="5" height="1" fill="#ff0000"/><rect x="94" y="617" width="5" height="1" fill="#ff0000"/><rect x="94" y="618" width="5" height="1" fill="#ff0000"/><rect x="94" y="618" width="5" height="1" fill="#ff0000"/><rect x="94" y="619" width="5" height="1" fill="#ff0000"/><rect x="34" y="502" width="5" height="1" fill="#1ed2e6"/><rect x="34" y="504" width="5" height="1" fill="#1ed2e6"/><rect x="34" y="507" width="5" height="1" fill="#1ed2e6"/><rect x="34" y="509" width="5" height="1" fill="#1ed2e6"/><rect x="34" y="512" width="5" height="1" fill="#1ed2e6"/><rect x="34" y="514" width="5" height="1" fill="#1ed2e6"/><rect x="34" y="517" width="5" height="1" fill="#1ed2e6"/><rect x="34" y="519" width="5" height="1" fill="#1ed2e6"/><rect x="34" y="522" width="5" height="1" fill="#1ed2e6"/><rect x="34" y="524" width="5" height="1" fill="#1ed2e6"/><rect x="34" y="526" width="5" height="1" fill="#1ed2e6"/><rect x="34" y="529" width="5" height="1" fill="#1ed2e6"/><rect x="34" y="531" width="5" height="1" fill="#1ed2e6"/><rect x="34" y="534" width="5" height="1" fill="#1ed2e6"/><rect x="34" y="536" width="5" height="1" fill="#1ed2e6"/><rect x="34" y="539" width="5" height="1" fill="#1ed2e6"/><rect x="34" y="541" width="5" height="1" fill="#1ed2e6"/><rect x="34" y="544" width="5" height="1" fill="#1ed2e6"/><rect x="34" y="546" width="5" height="1" fill="#1ed2e6"/><rect x="34" y="548" width="5" height="1" fill="#1ed2e6"/><rect x="34" y="551" width="5" height="1" fill="#1ed2e6"/><rect x="34" y="553" width="5" height="1" fill="#1ed2e6"/><rect x="34" y="556" width="5" height="1" fill="#1ed2e6"/><rect x="34" y="558" width="5" height="1" fill="#1ed2e6"/><rect x="34" y="561" width="5" height="1" fill="#1ed2e6"/><rect x="34" y="563" width="5" height="1" fill="#1ed2e6"/><rect x="34" y="565" width="5" height="1" fill="#1ed2e6"/><rect x="34" y="568" width="5" height="1" fill="#1ed2e6"/><rect x="34" y="570" width="5" height="1" fill="#1ed2e6"/><rect x="34" y="573" width="5" height="1" fill="#1ed2e6"/><rect x="34" y="575" width="5" height="1" fill="#1ed2e6"/><rect x="34" y="578" width="5" height="1" fill="#1ed2e6"/><rect x="34" y="580" width="5" height="1" fill="#1ed2e6"/><rect x="34" y="583" width="5" height="1" fill="#1ed2e6"/><rect x="34" y="585" width="5" height="1" fill="#1ed2e6"/><rect x="34" y="587" width="5" height="1" fill="#1ed2e6"/><rect x="34" y="590" width="5" height="1" fill="#1ed2e6"/><rect x="34" y="592" width="5" height="1" fill="#1ed2e6"/><rect x="34" y="595" width="5" height="1" fill="#1ed2e6"/><rect x="34" y="597" width="5" height="1" fill="#1ed2e6"/><rect x="34" y="600" width="5" height="1" fill="#1ed2e6"/><rect x="34" y="602" width="5" height="1" fill="#1ed2e6"/><rect x="34" y="605" width="5" height="1" fill="#1ed2e6"/><rect x="34" y="607" width="5" height="1" fill="#1ed2e6"/><rect x="34" y="609" width="5" height="1" fill="#1ed2e6"/><rect x="34" y="612" width="5" height="1" fill="#1ed2e6"/><rect x="34" y="614" width="5" height="1" fill="#1ed2e6"/><rect x="34" y="617" width="5" height="1" fill="#1ed2e6"/><rect x="34" y="619" width="5" height="1" fill="#1ed2e6"/><rect x="34" y="622" width="5" height="1" fill="#1ed2e6"/><rect x="51" y="501" width="5" height="1" fill="#1ed2e6"/><rect x="51" y="503" width="5" height="1" fill="#1ed2e6"/><rect x="51" y="506" width="5" height="1" fill="#1ed2e6"/><rect x="51" y="508" width="5" height="1" fill="#1ed2e6"/><rect x="51" y="511" width="5" height="1" fill="#1ed2e6"/><rect x="51" y="513" width="5" height="1" fill="#1ed2e6"/><rect x="51" y="515" width="5" height="1" fill="#1ed2e6"/><rect x="51" y="518" width="5" height="1" fill="#1ed2e6"/><rect x="51" y="520" width="5" height="1" fill="#1ed2e6"/><rect x="51" y="523" width="5" height="1" fill="#1ed2e6"/><rect x="51" y="525" width="5" height="1" fill="#1ed2e6"/><rect x="51" y="528" width="5" height="1" fill="#1ed2e6"/><rect x="51" y="530" width="5" height="1" fill="#1ed2e6"/><rect x="51" y="533" width="5" height="1" fill="#1ed2e6"/><rect x="51" y="535" width="5" height="1" fill="#1ed2e6"/><rect x="51" y="537" width="5" height="1" fill="#1ed2e6"/><rect x="51" y="540" width="5" height="1" fill="#1ed2e6"/><rect x="51" y="542" width="5" height="1" fill="#1ed2e6"/><rect x="51" y="545" width="5" height="1" fill="#1ed2e6"/><rect x="51" y="547" width="5" height="1" fill="#1ed2e6"/><rect x="51" y="550" width="5" height="1" fill="#1ed2e6"/><rect x="51" y="552" width="5" height="1" fill="#1ed2e6"/><rect x="51" y="554" width="5" height="1" fill="#1ed2e6"/><rect x="51" y="557" width="5" height="1" fill="#1ed2e6"/><rect x="51" y="559" width="5" height="1" fill="#1ed2e6"/><rect x="51" y="562" width="5" height="1" fill="#1ed2e6"/><rect x="51" y="564" width="5" height="1" fill="#1ed2e6"/><rect x="51" y="567" width="5" height="1" fill="#1ed2e6"/><rect x="51" y="569" width="5" height="1" fill="#1ed2e6"/><rect x="51" y="572" width="5" height="1" fill="#1ed2e6"/><rect x="51" y="574" width="5" height="1" fill="#1ed2e6"/><rect x="51" y="576" width="5" height="1" fill="#1ed2e6"/><rect x="51" y="579" width="5" height="1" fill="#1ed2e6"/><rect x="51" y="581" width="5" height="1" fill="#1ed2e6"/><rect x="51" y="584" width="5" height="1" fill="#1ed2e6"/><rect x="51" y="586" width="5" height="1" fill="#1ed2e6"/><rect x="51" y="589" width="5" height="1" fill="#1ed2e6"/><rect x="51" y="591" width="5" height="1" fill="#1ed2e6"/><rect x="51" y="594" width="5" height="1" fill="#1ed2e6"/><rect x="51" y="596" width="5" height="1" fill="#1ed2e6"/><rect x="51" y="598" width="5" height="1" fill="#1ed2e6"/><rect x="51" y="601" width="5" height="1" fill="#1ed2e6"/><rect x="51" y="603" width="5" height="1" fill="#1ed2e6"/><rect x="51" y="606" width="5" height="1" fill="#1ed2e6"/><rect x="51" y="608" width="5" height="1" fill="#1ed2e6"/><rect x="51" y="611" width="5" height="1" fill="#1ed2e6"/><rect x="51" y="613" width="5" height="1" fill="#1ed2e6"/><rect x="51" y="615" width="5" height="1" fill="#1ed2e6"/><rect x="51" y="618" width="5" height="1" fill="#1ed2e6"/><rect x="51" y="620" width="5" height="1" fill="#1ed2e6"/><rect x="64" y="502" width="5" height="1" fill="#1ed2e6"/><rect x="64" y="504" width="5" height="1" fill="#1ed2e6"/><rect x="64" y="507" width="5" height="1" fill="#1ed2e6"/><rect x="64" y="509" width="5" height="1" fill="#1ed2e6"/><rect x="64" y="512" width="5" height="1" fill="#1ed2e6"/><rect x="64" y="514" width="5" height="1" fill="#1ed2e6"/><rect x="64" y="517" width="5" height="1" fill="#1ed2e6"/><rect x="64" y="519" width="5" height="1" fill="#1ed2e6"/><rect x="64" y="522" width="5" height="1" fill="#1ed2e6"/><rect x="64" y="524" width="5" height="1" fill="#1ed2e6"/><rect x="64" y="526" width="5" height="1" fill="#1ed2e6"/><rect x="64" y="529" width="5" height="1" fill="#1ed2e6"/><rect x="64" y="531" width="5" height="1" fill="#1ed2e6"/><rect x="64" y="534" width="5" height="1" fill="#1ed2e6"/><rect x="64" y="536" width="5" height="1" fill="#1ed2e6"/><rect x="64" y="539" width="5" height="1" fill="#1ed2e6"/><rect x="64" y="541" width="5" height="1" fill="#1ed2e6"/><rect x="64" y="544" width="5" height="1" fill="#1ed2e6"/><rect x="64" y="546" width="5" height="1" fill="#1ed2e6"/><rect x="64" y="548" width="5" height="1" fill="#1ed2e6"/><rect x="64" y="551" width="5" height="1" fill="#1ed2e6"/><rect x="64" y="553" width="5" height="1" fill="#1ed2e6"/><rect x="64" y="556" width="5" height="1" fill="#1ed2e6"/><rect x="64" y="558" width="5" height="1" fill="#1ed2e6"/><rect x="64" y="561" width="5" height="1" fill="#1ed2e6"/><rect x="64" y="563" width="5" height="1" fill="#1ed2e6"/><rect x="64" y="565" width="5" height="1" fill="#1ed2e6"/><rect x="64" y="568" width="5" height="1" fill="#1ed2e6"/><rect x="64" y="570" width="5" height="1" fill="#1ed2e6"/><rect x="64" y="573" width="5" height="1" fill="#1ed2e6"/><rect x="64" y="575" width="5" height="1" fill="#1ed2e6"/><rect x="64" y="578" width="5" height="1" fill="#1ed2e6"/><rect x="64" y="580" width="5" height="1" fill="#1ed2e6"/><rect x="64" y="583" width="5" height="1" fill="#1ed2e6"/><rect x="64" y="585" width="5" height="1" fill="#1ed2e6"/><rect x="64" y="587" width="5" height="1" fill="#1ed2e6"/><rect x="64" y="590" width="5" height="1" fill="#1ed2e6"/><rect x="64" y="592" width="5" height="1" fill="#1ed2e6"/><rect x="64" y="595" width="5" height="1" fill="#1ed2e6"/><rect x="64" y="597" width="5" height="1" fill="#1ed2e6"/><rect x="64" y="600" width="5" height="1" fill="#1ed2e6"/><rect x="64" y="602" width="5" height="1" fill="#1ed2e6"/><rect x="64" y="605" width="5" height="1" fill="#1ed2e6"/><rect x="64" y="607" width="5" height="1" fill="#1ed2e6"/><rect x="64" y="609" width="5" height="1" fill="#1ed2e6"/><rect x="64" y="612" width="5" height="1" fill="#1ed2e6"/><rect x="64" y="614" width="5" height="1" fill="#1ed2e6"/><rect x="64" y="617" width="5" height="1" fill="#1ed2e6"/><rect x="64" y="619" width="5" height="1" fill="#1ed2e6"/><rect x="64" y="622" width="5" height="1" fill="#1ed2e6"/><rect x="81" y="501" width="5" height="1" fill="#1ed2e6"/><rect x="81" y="503" width="5" height="1" fill="#1ed2e6"/><rect x="81" y="506" width="5" height="1" fill="#1ed2e6"/><rect x="81" y="508" width="5" height="1" fill="#1ed2e6"/><rect x="81" y="511" width="5" height="1" fill="#1ed2e6"/><rect x="81" y="513" width="5" height="1" fill="#1ed2e6"/><rect x="81" y="515" width="5" height="1" fill="#1ed2e6"/><rect x="81" y="518" width="5" height="1" fill="#1ed2e6"/><rect x="81" y="520" width="5" height="1" fill="#1ed2e6"/><rect x="81" y="523" width="5" height="1" fill="#1ed2e6"/><rect x="81" y="525" width="5" height="1" fill="#1ed2e6"/><rect x="81" y="528" width="5" height="1" fill="#1ed2e6"/><rect x="81" y="530" width="5" height="1" fill="#1ed2e6"/><rect x="81" y="533" width="5" height="1" fill="#1ed2e6"/><rect x="81" y="535" width="5" height="1" fill="#1ed2e6"/><rect x="81" y="537" width="5" height="1" fill="#1ed2e6"/><rect x="81" y="540" width="5" height="1" fill="#1ed2e6"/><rect x="81" y="542" width="5" height="1" fill="#1ed2e6"/><rect x="81" y="545" width="5" height="1" fill="#1ed2e6"/><rect x="81" y="547" width="5" height="1" fill="#1ed2e6"/><rect x="81" y="550" width="5" height="1" fill="#1ed2e6"/><rect x="81" y="552" width="5" height="1" fill="#1ed2e6"/><rect x="81" y="554" width="5" height="1" fill="#1ed2e6"/><rect x="81" y="557" width="5" height="1" fill="#1ed2e6"/><rect x="81" y="559" width="5" height="1" fill="#1ed2e6"/><rect x="81" y="562" width="5" height="1" fill="#1ed2e6"/><rect x="81" y="564" width="5" height="1" fill="#1ed2e6"/><rect x="81" y="567" width="5" height="1" fill="#1ed2e6"/><rect x="81" y="569" width="5" height="1" fill="#1ed2e6"/><rect x="81" y="572" width="5" height="1" fill="#1ed2e6"/><rect x="81" y="574" width="5" height="1" fill="#1ed2e6"/><rect x="81" y="576" width="5" height="1" fill="#1ed2e6"/><rect x="81" y="579" width="5" height="1" fill="#1ed2e6"/><rect x="81" y="581" width="5" height="1" fill="#1ed2e6"/><rect x="81" y="584" width="5" height="1" fill="#1ed2e6"/><rect x="81" y="586" width="5" height="1" fill="#1ed2e6"/><rect x="81" y="589" width="5" height="1" fill="#1ed2e6"/><rect x="81" y="591" width="5" height="1" fill="#1ed2e6"/><rect x="81" y="594" width="5" height="1" fill="#1ed2e6"/><rect x="81" y="596" width="5" height="1" fill="#1ed2e6"/><rect x="81" y="598" width="5" height="1" fill="#1ed2e6"/><rect x="81" y="601" width="5" height="1" fill="#1ed2e6"/><rect x="81" y="603" width="5" height="1" fill="#1ed2e6"/><rect x="81" y="606" width="5" height="1" fill="#1ed2e6"/><rect x="81" y="608" width="5" height="1" fill="#1ed2e6"/><rect x="81" y="611" width="5" height="1" fill="#1ed2e6"/><rect x="81" y="613" width="5" height="1" fill="#1ed2e6"/><rect x="81" y="615" width="5" height="1" fill="#1ed2e6"/><rect x="81" y="618" width="5" height="1" fill="#1ed2e6"/><rect x="81" y="620" width="5" height="1" fill="#1ed2e6"/><rect x="94" y="502" width="5" height="1" fill="#1ed2e6"/><rect x="94" y="504" width="5" height="1" fill="#1ed2e6"/><rect x="94" y="507" width="5" height="1" fill="#1ed2e6"/><rect x="94" y="509" width="5" height="1" fill="#1ed2e6"/><rect x="94" y="512" width="5" height="1" fill="#1ed2e6"/><rect x="94" y="514" width="5" height="1" fill="#1ed2e6"/><rect x="94" y="517" width="5" height="1" fill="#1ed2e6"/><rect x="94" y="519" width="5" height="1" fill="#1ed2e6"/><rect x="94" y="522" width="5" height="1" fill="#1ed2e6"/><rect x="94" y="524" width="5" height="1" fill="#1ed2e6"/><rect x="94" y="526" width="5" height="1" fill="#1ed2e6"/><rect x="94" y="529" width="5" height="1" fill="#1ed2e6"/><rect x="94" y="531" width="5" height="1" fill="#1ed2e6"/><rect x="94" y="534" width="5" height="1" fill="#1ed2e6"/><rect x="94" y="536" width="5" height="1" fill="#1ed2e6"/><rect x="94" y="539" width="5" height="1" fill="#1ed2e6"/><rect x="94" y="541" width="5" height="1" fill="#1ed2e6"/><rect x="94" y="544" width="5" height="1" fill="#1ed2e6"/><rect x="94" y="546" width="5" height="1" fill="#1ed2e6"/><rect x="94" y="548" width="5" height="1" fill="#1ed2e6"/><rect x="94" y="551" width="5" height="1" fill="#1ed2e6"/><rect x="94" y="553" width="5" height="1" fill="#1ed2e6"/><rect x="94" y="556" width="5" height="1" fill="#1ed2e6"/><rect x="94" y="558" width="5" height="1" fill="#1ed2e6"/><rect x="94" y="561" width="5" height="1" fill="#1ed2e6"/><rect x="94" y="563" width="5" height="1" fill="#1ed2e6"/><rect x="94" y="565" width="5" height="1" fill="#1ed2e6"/><rect x="94" y="568" width="5" height="1" fill="#1ed2e6"/><rect x="94" y="570" width="5" height="1" fill="#1ed2e6"/><rect x="94" y="573" width="5" height="1" fill="#1ed2e6"/><rect x="94" y="575" width="5" height="1" fill="#1ed2e6"/><rect x="94" y="578" width="5" height="1" fill="#1ed2e6"/><rect x="94" y="580" width="5" height="1" fill="#1ed2e6"/><rect x="94" y="583" width="5" height="1" fill="#1ed2e6"/><rect x="94" y="585" width="5" height="1" fill="#1ed2e6"/><rect x="94" y="587" width="5" height="1" fill="#1ed2e6"/><rect x="94" y="590" width="5" height="1" fill="#1ed2e6"/><rect x="94" y="592" width="5" height="1" fill="#1ed2e6"/><rect x="94" y="595" width="5" height="1" fill="#1ed2e6"/><rect x="94" y="597" width="5" height="1" fill="#1ed2e6"/><rect x="94" y="600" width="5" height="1" fill="#1ed2e6"/><rect x="94" y="602" width="5" height="1" fill="#1ed2e6"/><rect x="94" y="605" width="5" height="1" fill="#1ed2e6"/><rect x="94" y="607" width="5" height="1" fill="#1ed2e6"/><rect x="94" y="609" width="5" height="1" fill="#1ed2e6"/><rect x="94" y="612" width="5" height="1" fill="#1ed2e6"/><rect x="94" y="614" width="5" height="1" fill="#1ed2e6"/><rect x="94" y="617" width="5" height="1" fill="#1ed2e6"/><rect x="94" y="619" width="5" height="1" fill="#1ed2e6"/><rect x="94" y="622" width="5" height="1" fill="#1ed2e6"/><rect x="334" y="500" width="14" height="123" fill="#ffff00"/><rect x="347" y="501" width="48" height="122" fill="#cc0000"/><rect x="395" y="500" width="9" height="123" fill="#ffff00"/><rect x="390" y="546" width="5" height="31" fill="#0a8cff"/><rect x="395" y="500" width="9" height="123" fill="#ffff00"/><rect x="403" y="546" width="5" height="31" fill="#ff00ff"/><rect x="334" y="529" width="5" height="1" fill="#6a1fd8"/><rect x="334" y="530" width="5" height="1" fill="#6a1fd8"/><rect x="334" y="530" width="5" height="1" fill="#6a1fd8"/><rect x="334" y="531" width="5" height="1" fill="#6a1fd8"/><rect x="334" y="559" width="5" height="1" fill="#6a1fd8"/><rect x="334" y="559" width="5" height="1" fill="#6a1fd8"/><rect x="334" y="560" width="5" height="1" fill="#6a1fd8"/><rect x="334" y="560" width="5" height="1" fill="#6a1fd8"/><rect x="334" y="590" width="5" height="1" fill="#6a1fd8"/><rect x="334" y="591" width="5" height="1" fill="#6a1fd8"/><rect x="334" y="592" width="5" height="1" fill="#6a1fd8"/><rect x="334" y="592" width="5" height="1" fill="#6a1fd8"/><rect x="334" y="620" width="5" height="1" fill="#6a1fd8"/><rect x="334" y="620" width="5" height="1" fill="#6a1fd8"/><rect x="334" y="621" width="5" height="1" fill="#6a1fd8"/><rect x="334" y="621" width="5" height="1" fill="#6a1fd8"/><rect x="334" y="537" width="5" height="1" fill="#ff0000"/><rect x="334" y="537" width="5" height="1" fill="#ff0000"/><rect x="334" y="538" width="5" height="1" fill="#ff0000"/><rect x="334" y="538" width="5" height="1" fill="#ff0000"/><rect x="334" y="539" width="5" height="1" fill="#ff0000"/><rect x="334" y="539" width="5" height="1" fill="#ff0000"/><rect x="334" y="540" width="5" height="1" fill="#ff0000"/><rect x="334" y="541" width="5" height="1" fill="#ff0000"/><rect x="334" y="576" width="5" height="1" fill="#ff0000"/><rect x="334" y="576" width="5" height="1" fill="#ff0000"/><rect x="334" y="577" width="5" height="1" fill="#ff0000"/><rect x="334" y="577" width="5" height="1" fill="#ff0000"/><rect x="334" y="578" width="5" height="1" fill="#ff0000"/><rect x="334" y="578" width="5" height="1" fill="#ff0000"/><rect x="334" y="579" width="5" height="1" fill="#ff0000"/><rect x="334" y="580" width="5" height="1" fill="#ff0000"/><rect x="334" y="615" width="5" height="1" fill="#ff0000"/><rect x="334" y="615" width="5" height="1" fill="#ff0000"/><rect x="334" y="616" width="5" height="1" fill="#ff0000"/><rect x="334" y="616" width="5" height="1" fill="#ff0000"/><rect x="334" y="617" width="5" height="1" fill="#ff0000"/><rect x="334" y="618" width="5" height="1" fill="#ff0000"/><rect x="334" y="618" width="5" height="1" fill="#ff0000"/><rect x="334" y="619" width="5" height="1" fill="#ff0000"/><rect x="395" y="529" width="5" height="1" fill="#6a1fd8"/><rect x="395" y="530" width="5" height="1" fill="#6a1fd8"/><rect x="395" y="530" width="5" height="1" fill="#6a1fd8"/><rect x="395" y="531" width="5" height="1" fill="#6a1fd8"/><rect x="395" y="559" width="5" height="1" fill="#6a1fd8"/><rect x="395" y="559" width="5" height="1" fill="#6a1fd8"/><rect x="395" y="560" width="5" height="1" fill="#6a1fd8"/><rect x="395" y="560" width="5" height="1" fill="#6a1fd8"/><rect x="395" y="590" width="5" height="1" fill="#6a1fd8"/><rect x="395" y="591" width="5" height="1" fill="#6a1fd8"/><rect x="395" y="592" width="5" height="1" fill="#6a1fd8"/><rect x="395" y="592" width="5" height="1" fill="#6a1fd8"/><rect x="395" y="620" width="5" height="1" fill="#6a1fd8"/><rect x="395" y="620" width="5" height="1" fill="#6a1fd8"/><rect x="395" y="621" width="5" height="1" fill="#6a1fd8"/><rect x="395" y="621" width="5" height="1" fill="#6a1fd8"/><rect x="395" y="537" width="5" height="1" fill="#ff0000"/><rect x="395" y="537" width="5" height="1" fill="#ff0000"/><rect x="395" y="538" width="5" height="1" fill="#ff0000"/><rect x="395" y="538" width="5" height="1" fill="#ff0000"/><rect x="395" y="539" width="5" height="1" fill="#ff0000"/><rect x="395" y="539" width="5" height="1" fill="#ff0000"/><rect x="395" y="540" width="5" height="1" fill="#ff0000"/><rect x="395" y="541" width="5" height="1" fill="#ff0000"/><rect x="395" y="576" width="5" height="1" fill="#ff0000"/><rect x="395" y="576" width="5" height="1" fill="#ff0000"/><rect x="395" y="577" width="5" height="1" fill="#ff0000"/><rect x="395" y="577" width="5" height="1" fill="#ff0000"/><rect x="395" y="578" width="5" height="1" fill="#ff0000"/><rect x="395" y="578" width="5" height="1" fill="#ff0000"/><rect x="395" y="579" width="5" height="1" fill="#ff0000"/><rect x="395" y="580" width="5" height="1" fill="#ff0000"/><rect x="395" y="615" width="5" height="1" fill="#ff0000"/><rect x="395" y="615" width="5" height="1" fill="#ff0000"/><rect x="395" y="616" width="5" height="1" fill="#ff0000"/><rect x="395" y="616" width="5" height="1" fill="#ff0000"/><rect x="395" y="617" width="5" height="1" fill="#ff0000"/><rect x="395" y="618" width="5" height="1" fill="#ff0000"/><rect x="395" y="618" width="5" height="1" fill="#ff0000"/><rect x="395" y="619" width="5" height="1" fill="#ff0000"/><rect x="334" y="502" width="5" height="1" fill="#1ed2e6"/><rect x="334" y="504" width="5" height="1" fill="#1ed2e6"/><rect x="334" y="507" width="5" height="1" fill="#1ed2e6"/><rect x="334" y="509" width="5" height="1" fill="#1ed2e6"/><rect x="334" y="512" width="5" height="1" fill="#1ed2e6"/><rect x="334" y="514" width="5" height="1" fill="#1ed2e6"/><rect x="334" y="517" width="5" height="1" fill="#1ed2e6"/><rect x="334" y="519" width="5" height="1" fill="#1ed2e6"/><rect x="334" y="522" width="5" height="1" fill="#1ed2e6"/><rect x="334" y="524" width="5" height="1" fill="#1ed2e6"/><rect x="334" y="526" width="5" height="1" fill="#1ed2e6"/><rect x="334" y="529" width="5" height="1" fill="#1ed2e6"/><rect x="334" y="531" width="5" height="1" fill="#1ed2e6"/><rect x="334" y="534" width="5" height="1" fill="#1ed2e6"/><rect x="334" y="536" width="5" height="1" fill="#1ed2e6"/><rect x="334" y="539" width="5" height="1" fill="#1ed2e6"/><rect x="334" y="541" width="5" height="1" fill="#1ed2e6"/><rect x="334" y="544" width="5" height="1" fill="#1ed2e6"/><rect x="334" y="546" width="5" height="1" fill="#1ed2e6"/><rect x="334" y="548" width="5" height="1" fill="#1ed2e6"/><rect x="334" y="551" width="5" height="1" fill="#1ed2e6"/><rect x="334" y="553" width="5" height="1" fill="#1ed2e6"/><rect x="334" y="556" width="5" height="1" fill="#1ed2e6"/><rect x="334" y="558" width="5" height="1" fill="#1ed2e6"/><rect x="334" y="561" width="5" height="1" fill="#1ed2e6"/><rect x="334" y="563" width="5" height="1" fill="#1ed2e6"/><rect x="334" y="565" width="5" height="1" fill="#1ed2e6"/><rect x="334" y="568" width="5" height="1" fill="#1ed2e6"/><rect x="334" y="570" width="5" height="1" fill="#1ed2e6"/><rect x="334" y="573" width="5" height="1" fill="#1ed2e6"/><rect x="334" y="575" width="5" height="1" fill="#1ed2e6"/><rect x="334" y="578" width="5" height="1" fill="#1ed2e6"/><rect x="334" y="580" width="5" height="1" fill="#1ed2e6"/><rect x="334" y="583" width="5" height="1" fill="#1ed2e6"/><rect x="334" y="585" width="5" height="1" fill="#1ed2e6"/><rect x="334" y="587" width="5" height="1" fill="#1ed2e6"/><rect x="334" y="590" width="5" height="1" fill="#1ed2e6"/><rect x="334" y="592" width="5" height="1" fill="#1ed2e6"/><rect x="334" y="595" width="5" height="1" fill="#1ed2e6"/><rect x="334" y="597" width="5" height="1" fill="#1ed2e6"/><rect x="334" y="600" width="5" height="1" fill="#1ed2e6"/><rect x="334" y="602" width="5" height="1" fill="#1ed2e6"/><rect x="334" y="605" width="5" height="1" fill="#1ed2e6"/><rect x="334" y="607" width="5" height="1" fill="#1ed2e6"/><rect x="334" y="609" width="5" height="1" fill="#1ed2e6"/><rect x="334" y="612" width="5" height="1" fill="#1ed2e6"/><rect x="334" y="614" width="5" height="1" fill="#1ed2e6"/><rect x="334" y="617" width="5" height="1" fill="#1ed2e6"/><rect x="334" y="619" width="5" height="1" fill="#1ed2e6"/><rect x="334" y="622" width="5" height="1" fill="#1ed2e6"/><rect x="352" y="501" width="5" height="1" fill="#1ed2e6"/><rect x="352" y="503" width="5" height="1" fill="#1ed2e6"/><rect x="352" y="506" width="5" height="1" fill="#1ed2e6"/><rect x="352" y="508" width="5" height="1" fill="#1ed2e6"/><rect x="352" y="511" width="5" height="1" fill="#1ed2e6"/><rect x="352" y="513" width="5" height="1" fill="#1ed2e6"/><rect x="352" y="515" width="5" height="1" fill="#1ed2e6"/><rect x="352" y="518" width="5" height="1" fill="#1ed2e6"/><rect x="352" y="520" width="5" height="1" fill="#1ed2e6"/><rect x="352" y="523" width="5" height="1" fill="#1ed2e6"/><rect x="352" y="525" width="5" height="1" fill="#1ed2e6"/><rect x="352" y="528" width="5" height="1" fill="#1ed2e6"/><rect x="352" y="530" width="5" height="1" fill="#1ed2e6"/><rect x="352" y="533" width="5" height="1" fill="#1ed2e6"/><rect x="352" y="535" width="5" height="1" fill="#1ed2e6"/><rect x="352" y="537" width="5" height="1" fill="#1ed2e6"/><rect x="352" y="540" width="5" height="1" fill="#1ed2e6"/><rect x="352" y="542" width="5" height="1" fill="#1ed2e6"/><rect x="352" y="545" width="5" height="1" fill="#1ed2e6"/><rect x="352" y="547" width="5" height="1" fill="#1ed2e6"/><rect x="352" y="550" width="5" height="1" fill="#1ed2e6"/><rect x="352" y="552" width="5" height="1" fill="#1ed2e6"/><rect x="352" y="554" width="5" height="1" fill="#1ed2e6"/><rect x="352" y="557" width="5" height="1" fill="#1ed2e6"/><rect x="352" y="559" width="5" height="1" fill="#1ed2e6"/><rect x="352" y="562" width="5" height="1" fill="#1ed2e6"/><rect x="352" y="564" width="5" height="1" fill="#1ed2e6"/><rect x="352" y="567" width="5" height="1" fill="#1ed2e6"/><rect x="352" y="569" width="5" height="1" fill="#1ed2e6"/><rect x="352" y="572" width="5" height="1" fill="#1ed2e6"/><rect x="352" y="574" width="5" height="1" fill="#1ed2e6"/><rect x="352" y="576" width="5" height="1" fill="#1ed2e6"/><rect x="352" y="579" width="5" height="1" fill="#1ed2e6"/><rect x="352" y="581" width="5" height="1" fill="#1ed2e6"/><rect x="352" y="584" width="5" height="1" fill="#1ed2e6"/><rect x="352" y="586" width="5" height="1" fill="#1ed2e6"/><rect x="352" y="589" width="5" height="1" fill="#1ed2e6"/><rect x="352" y="591" width="5" height="1" fill="#1ed2e6"/><rect x="352" y="594" width="5" height="1" fill="#1ed2e6"/><rect x="352" y="596" width="5" height="1" fill="#1ed2e6"/><rect x="352" y="598" width="5" height="1" fill="#1ed2e6"/><rect x="352" y="601" width="5" height="1" fill="#1ed2e6"/><rect x="352" y="603" width="5" height="1" fill="#1ed2e6"/><rect x="352" y="606" width="5" height="1" fill="#1ed2e6"/><rect x="352" y="608" width="5" height="1" fill="#1ed2e6"/><rect x="352" y="611" width="5" height="1" fill="#1ed2e6"/><rect x="352" y="613" width="5" height="1" fill="#1ed2e6"/><rect x="352" y="615" width="5" height="1" fill="#1ed2e6"/><rect x="352" y="618" width="5" height="1" fill="#1ed2e6"/><rect x="352" y="620" width="5" height="1" fill="#1ed2e6"/><rect x="365" y="502" width="5" height="1" fill="#1ed2e6"/><rect x="365" y="504" width="5" height="1" fill="#1ed2e6"/><rect x="365" y="507" width="5" height="1" fill="#1ed2e6"/><rect x="365" y="509" width="5" height="1" fill="#1ed2e6"/><rect x="365" y="512" width="5" height="1" fill="#1ed2e6"/><rect x="365" y="514" width="5" height="1" fill="#1ed2e6"/><rect x="365" y="517" width="5" height="1" fill="#1ed2e6"/><rect x="365" y="519" width="5" height="1" fill="#1ed2e6"/><rect x="365" y="522" width="5" height="1" fill="#1ed2e6"/><rect x="365" y="524" width="5" height="1" fill="#1ed2e6"/><rect x="365" y="526" width="5" height="1" fill="#1ed2e6"/><rect x="365" y="529" width="5" height="1" fill="#1ed2e6"/><rect x="365" y="531" width="5" height="1" fill="#1ed2e6"/><rect x="365" y="534" width="5" height="1" fill="#1ed2e6"/><rect x="365" y="536" width="5" height="1" fill="#1ed2e6"/><rect x="365" y="539" width="5" height="1" fill="#1ed2e6"/><rect x="365" y="541" width="5" height="1" fill="#1ed2e6"/><rect x="365" y="544" width="5" height="1" fill="#1ed2e6"/><rect x="365" y="546" width="5" height="1" fill="#1ed2e6"/><rect x="365" y="548" width="5" height="1" fill="#1ed2e6"/><rect x="365" y="551" width="5" height="1" fill="#1ed2e6"/><rect x="365" y="553" width="5" height="1" fill="#1ed2e6"/><rect x="365" y="556" width="5" height="1" fill="#1ed2e6"/><rect x="365" y="558" width="5" height="1" fill="#1ed2e6"/><rect x="365" y="561" width="5" height="1" fill="#1ed2e6"/><rect x="365" y="563" width="5" height="1" fill="#1ed2e6"/><rect x="365" y="565" width="5" height="1" fill="#1ed2e6"/><rect x="365" y="568" width="5" height="1" fill="#1ed2e6"/><rect x="365" y="570" width="5" height="1" fill="#1ed2e6"/><rect x="365" y="573" width="5" height="1" fill="#1ed2e6"/><rect x="365" y="575" width="5" height="1" fill="#1ed2e6"/><rect x="365" y="578" width="5" height="1" fill="#1ed2e6"/><rect x="365" y="580" width="5" height="1" fill="#1ed2e6"/><rect x="365" y="583" width="5" height="1" fill="#1ed2e6"/><rect x="365" y="585" width="5" height="1" fill="#1ed2e6"/><rect x="365" y="587" width="5" height="1" fill="#1ed2e6"/><rect x="365" y="590" width="5" height="1" fill="#1ed2e6"/><rect x="365" y="592" width="5" height="1" fill="#1ed2e6"/><rect x="365" y="595" width="5" height="1" fill="#1ed2e6"/><rect x="365" y="597" width="5" height="1" fill="#1ed2e6"/><rect x="365" y="600" width="5" height="1" fill="#1ed2e6"/><rect x="365" y="602" width="5" height="1" fill="#1ed2e6"/><rect x="365" y="605" width="5" height="1" fill="#1ed2e6"/><rect x="365" y="607" width="5" height="1" fill="#1ed2e6"/><rect x="365" y="609" width="5" height="1" fill="#1ed2e6"/><rect x="365" y="612" width="5" height="1" fill="#1ed2e6"/><rect x="365" y="614" width="5" height="1" fill="#1ed2e6"/><rect x="365" y="617" width="5" height="1" fill="#1ed2e6"/><rect x="365" y="619" width="5" height="1" fill="#1ed2e6"/><rect x="365" y="622" width="5" height="1" fill="#1ed2e6"/><rect x="382" y="501" width="5" height="1" fill="#1ed2e6"/><rect x="382" y="503" width="5" height="1" fill="#1ed2e6"/><rect x="382" y="506" width="5" height="1" fill="#1ed2e6"/><rect x="382" y="508" width="5" height="1" fill="#1ed2e6"/><rect x="382" y="511" width="5" height="1" fill="#1ed2e6"/><rect x="382" y="513" width="5" height="1" fill="#1ed2e6"/><rect x="382" y="515" width="5" height="1" fill="#1ed2e6"/><rect x="382" y="518" width="5" height="1" fill="#1ed2e6"/><rect x="382" y="520" width="5" height="1" fill="#1ed2e6"/><rect x="382" y="523" width="5" height="1" fill="#1ed2e6"/><rect x="382" y="525" width="5" height="1" fill="#1ed2e6"/><rect x="382" y="528" width="5" height="1" fill="#1ed2e6"/><rect x="382" y="530" width="5" height="1" fill="#1ed2e6"/><rect x="382" y="533" width="5" height="1" fill="#1ed2e6"/><rect x="382" y="535" width="5" height="1" fill="#1ed2e6"/><rect x="382" y="537" width="5" height="1" fill="#1ed2e6"/><rect x="382" y="540" width="5" height="1" fill="#1ed2e6"/><rect x="382" y="542" width="5" height="1" fill="#1ed2e6"/><rect x="382" y="545" width="5" height="1" fill="#1ed2e6"/><rect x="382" y="547" width="5" height="1" fill="#1ed2e6"/><rect x="382" y="550" width="5" height="1" fill="#1ed2e6"/><rect x="382" y="552" width="5" height="1" fill="#1ed2e6"/><rect x="382" y="554" width="5" height="1" fill="#1ed2e6"/><rect x="382" y="557" width="5" height="1" fill="#1ed2e6"/><rect x="382" y="559" width="5" height="1" fill="#1ed2e6"/><rect x="382" y="562" width="5" height="1" fill="#1ed2e6"/><rect x="382" y="564" width="5" height="1" fill="#1ed2e6"/><rect x="382" y="567" width="5" height="1" fill="#1ed2e6"/><rect x="382" y="569" width="5" height="1" fill="#1ed2e6"/><rect x="382" y="572" width="5" height="1" fill="#1ed2e6"/><rect x="382" y="574" width="5" height="1" fill="#1ed2e6"/><rect x="382" y="576" width="5" height="1" fill="#1ed2e6"/><rect x="382" y="579" width="5" height="1" fill="#1ed2e6"/><rect x="382" y="581" width="5" height="1" fill="#1ed2e6"/><rect x="382" y="584" width="5" height="1" fill="#1ed2e6"/><rect x="382" y="586" width="5" height="1" fill="#1ed2e6"/><rect x="382" y="589" width="5" height="1" fill="#1ed2e6"/><rect x="382" y="591" width="5" height="1" fill="#1ed2e6"/><rect x="382" y="594" width="5" height="1" fill="#1ed2e6"/><rect x="382" y="596" width="5" height="1" fill="#1ed2e6"/><rect x="382" y="598" width="5" height="1" fill="#1ed2e6"/><rect x="382" y="601" width="5" height="1" fill="#1ed2e6"/><rect x="382" y="603" width="5" height="1" fill="#1ed2e6"/><rect x="382" y="606" width="5" height="1" fill="#1ed2e6"/><rect x="382" y="608" width="5" height="1" fill="#1ed2e6"/><rect x="382" y="611" width="5" height="1" fill="#1ed2e6"/><rect x="382" y="613" width="5" height="1" fill="#1ed2e6"/><rect x="382" y="615" width="5" height="1" fill="#1ed2e6"/><rect x="382" y="618" width="5" height="1" fill="#1ed2e6"/><rect x="382" y="620" width="5" height="1" fill="#1ed2e6"/><rect x="395" y="502" width="5" height="1" fill="#1ed2e6"/><rect x="395" y="504" width="5" height="1" fill="#1ed2e6"/><rect x="395" y="507" width="5" height="1" fill="#1ed2e6"/><rect x="395" y="509" width="5" height="1" fill="#1ed2e6"/><rect x="395" y="512" width="5" height="1" fill="#1ed2e6"/><rect x="395" y="514" width="5" height="1" fill="#1ed2e6"/><rect x="395" y="517" width="5" height="1" fill="#1ed2e6"/><rect x="395" y="519" width="5" height="1" fill="#1ed2e6"/><rect x="395" y="522" width="5" height="1" fill="#1ed2e6"/><rect x="395" y="524" width="5" height="1" fill="#1ed2e6"/><rect x="395" y="526" width="5" height="1" fill="#1ed2e6"/><rect x="395" y="529" width="5" height="1" fill="#1ed2e6"/><rect x="395" y="531" width="5" height="1" fill="#1ed2e6"/><rect x="395" y="534" width="5" height="1" fill="#1ed2e6"/><rect x="395" y="536" width="5" height="1" fill="#1ed2e6"/><rect x="395" y="539" width="5" height="1" fill="#1ed2e6"/><rect x="395" y="541" width="5" height="1" fill="#1ed2e6"/><rect x="395" y="544" width="5" height="1" fill="#1ed2e6"/><rect x="395" y="546" width="5" height="1" fill="#1ed2e6"/><rect x="395" y="548" width="5" height="1" fill="#1ed2e6"/><rect x="395" y="551" width="5" height="1" fill="#1ed2e6"/><rect x="395" y="553" width="5" height="1" fill="#1ed2e6"/><rect x="395" y="556" width="5" height="1" fill="#1ed2e6"/><rect x="395" y="558" width="5" height="1" fill="#1ed2e6"/><rect x="395" y="561" width="5" height="1" fill="#1ed2e6"/><rect x="395" y="563" width="5" height="1" fill="#1ed2e6"/><rect x="395" y="565" width="5" height="1" fill="#1ed2e6"/><rect x="395" y="568" width="5" height="1" fill="#1ed2e6"/><rect x="395" y="570" width="5" height="1" fill="#1ed2e6"/><rect x="395" y="573" width="5" height="1" fill="#1ed2e6"/><rect x="395" y="575" width="5" height="1" fill="#1ed2e6"/><rect x="395" y="578" width="5" height="1" fill="#1ed2e6"/><rect x="395" y="580" width="5" height="1" fill="#1ed2e6"/><rect x="395" y="583" width="5" height="1" fill="#1ed2e6"/><rect x="395" y="585" width="5" height="1" fill="#1ed2e6"/><rect x="395" y="587" width="5" height="1" fill="#1ed2e6"/><rect x="395" y="590" width="5" height="1" fill="#1ed2e6"/><rect x="395" y="592" width="5" height="1" fill="#1ed2e6"/><rect x="395" y="595" width="5" height="1" fill="#1ed2e6"/><rect x="395" y="597" width="5" height="1" fill="#1ed2e6"/><rect x="395" y="600" width="5" height="1" fill="#1ed2e6"/><rect x="395" y="602" width="5" height="1" fill="#1ed2e6"/><rect x="395" y="605" width="5" height="1" fill="#1ed2e6"/><rect x="395" y="607" width="5" height="1" fill="#1ed2e6"/><rect x="395" y="609" width="5" height="1" fill="#1ed2e6"/><rect x="395" y="612" width="5" height="1" fill="#1ed2e6"/><rect x="395" y="614" width="5" height="1" fill="#1ed2e6"/><rect x="395" y="617" width="5" height="1" fill="#1ed2e6"/><rect x="395" y="619" width="5" height="1" fill="#1ed2e6"/><rect x="395" y="622" width="5" height="1" fill="#1ed2e6"/><rect x="38" y="487" width="1" height="1" fill="#0000ff"/><rect x="39" y="487" width="1" height="1" fill="#0000ff"/><rect x="40" y="487" width="1" height="1" fill="#0000ff"/><rect x="37" y="488" width="1" height="1" fill="#0000ff"/><rect x="41" y="488" width="1" height="1" fill="#0000ff"/><rect x="37" y="489" width="1" height="1" fill="#0000ff"/><rect x="41" y="489" width="1" height="1" fill="#0000ff"/><rect x="37" y="490" width="1" height="1" fill="#0000ff"/><rect x="41" y="490" width="1" height="1" fill="#0000ff"/><rect x="37" y="491" width="1" height="1" fill="#0000ff"/><rect x="41" y="491" width="1" height="1" fill="#0000ff"/><rect x="37" y="492" width="1" height="1" fill="#0000ff"/><rect x="41" y="492" width="1" height="1" fill="#0000ff"/><rect x="37" y="493" width="1" height="1" fill="#0000ff"/><rect x="41" y="493" width="1" height="1" fill="#0000ff"/><rect x="37" y="494" width="1" height="1" fill="#0000ff"/><rect x="41" y="494" width="1" height="1" fill="#0000ff"/><rect x="38" y="495" width="1" height="1" fill="#0000ff"/><rect x="39" y="495" width="1" height="1" fill="#0000ff"/><rect x="40" y="495" width="1" height="1" fill="#0000ff"/><rect x="69" y="487" width="1" height="1" fill="#0000ff"/><rect x="68" y="488" width="1" height="1" fill="#0000ff"/><rect x="69" y="488" width="1" height="1" fill="#0000ff"/><rect x="67" y="489" width="1" height="1" fill="#0000ff"/><rect x="69" y="489" width="1" height="1" fill="#0000ff"/><rect x="69" y="490" width="1" height="1" fill="#0000ff"/><rect x="69" y="491" width="1" height="1" fill="#0000ff"/><rect x="69" y="492" width="1" height="1" fill="#0000ff"/><rect x="69" y="493" width="1" height="1" fill="#0000ff"/><rect x="69" y="494" width="1" height="1" fill="#0000ff"/><rect x="69" y="495" width="1" height="1" fill="#0000ff"/><rect x="98" y="487" width="1" height="1" fill="#8a8a8a"/><rect x="99" y="487" width="1" height="1" fill="#8a8a8a"/><rect x="100" y="487" width="1" height="1" fill="#8a8a8a"/><rect x="97" y="488" width="1" height="1" fill="#8a8a8a"/><rect x="101" y="488" width="1" height="1" fill="#8a8a8a"/><rect x="101" y="489" width="1" height="1" fill="#8a8a8a"/><rect x="100" y="490" width="1" height="1" fill="#8a8a8a"/><rect x="99" y="491" width="1" height="1" fill="#8a8a8a"/><rect x="98" y="492" width="1" height="1" fill="#8a8a8a"/><rect x="97" y="493" width="1" height="1" fill="#8a8a8a"/><rect x="97" y="494" width="1" height="1" fill="#8a8a8a"/><rect x="97" y="495" width="1" height="1" fill="#8a8a8a"/><rect x="98" y="495" width="1" height="1" fill="#8a8a8a"/><rect x="99" y="495" width="1" height="1" fill="#8a8a8a"/><rect x="100" y="495" width="1" height="1" fill="#8a8a8a"/><rect x="101" y="495" width="1" height="1" fill="#8a8a8a"/><rect x="128" y="487" width="1" height="1" fill="#8a8a8a"/><rect x="129" y="487" width="1" height="1" fill="#8a8a8a"/><rect x="130" y="487" width="1" height="1" fill="#8a8a8a"/><rect x="127" y="488" width="1" height="1" fill="#8a8a8a"/><rect x="131" y="488" width="1" height="1" fill="#8a8a8a"/><rect x="131" y="489" width="1" height="1" fill="#8a8a8a"/><rect x="131" y="490" width="1" height="1" fill="#8a8a8a"/><rect x="129" y="491" width="1" height="1" fill="#8a8a8a"/><rect x="130" y="491" width="1" height="1" fill="#8a8a8a"/><rect x="131" y="492" width="1" height="1" fill="#8a8a8a"/><rect x="131" y="493" width="1" height="1" fill="#8a8a8a"/><rect x="127" y="494" width="1" height="1" fill="#8a8a8a"/><rect x="131" y="494" width="1" height="1" fill="#8a8a8a"/><rect x="128" y="495" width="1" height="1" fill="#8a8a8a"/><rect x="129" y="495" width="1" height="1" fill="#8a8a8a"/><rect x="130" y="495" width="1" height="1" fill="#8a8a8a"/><rect x="160" y="487" width="1" height="1" fill="#ff0000"/><rect x="159" y="488" width="1" height="1" fill="#ff0000"/><rect x="160" y="488" width="1" height="1" fill="#ff0000"/><rect x="159" y="489" width="1" height="1" fill="#ff0000"/><rect x="160" y="489" width="1" height="1" fill="#ff0000"/><rect x="158" y="490" width="1" height="1" fill="#ff0000"/><rect x="160" y="490" width="1" height="1" fill="#ff0000"/><rect x="158" y="491" width="1" height="1" fill="#ff0000"/><rect x="160" y="491" width="1" height="1" fill="#ff0000"/><rect x="157" y="492" width="1" height="1" fill="#ff0000"/><rect x="160" y="492" width="1" height="1" fill="#ff0000"/><rect x="157" y="493" width="1" height="1" fill="#ff0000"/><rect x="158" y="493" width="1" height="1" fill="#ff0000"/><rect x="159" y="493" width="1" height="1" fill="#ff0000"/><rect x="160" y="493" width="1" height="1" fill="#ff0000"/><rect x="161" y="493" width="1" height="1" fill="#ff0000"/><rect x="160" y="494" width="1" height="1" fill="#ff0000"/><rect x="160" y="495" width="1" height="1" fill="#ff0000"/><rect x="187" y="487" width="1" height="1" fill="#ff0000"/><rect x="188" y="487" width="1" height="1" fill="#ff0000"/><rect x="189" y="487" width="1" height="1" fill="#ff0000"/><rect x="190" y="487" width="1" height="1" fill="#ff0000"/><rect x="191" y="487" width="1" height="1" fill="#ff0000"/><rect x="187" y="488" width="1" height="1" fill="#ff0000"/><rect x="187" y="489" width="1" height="1" fill="#ff0000"/><rect x="187" y="490" width="1" height="1" fill="#ff0000"/><rect x="188" y="490" width="1" height="1" fill="#ff0000"/><rect x="189" y="490" width="1" height="1" fill="#ff0000"/><rect x="190" y="490" width="1" height="1" fill="#ff0000"/><rect x="191" y="491" width="1" height="1" fill="#ff0000"/><rect x="191" y="492" width="1" height="1" fill="#ff0000"/><rect x="191" y="493" width="1" height="1" fill="#ff0000"/><rect x="187" y="494" width="1" height="1" fill="#ff0000"/><rect x="191" y="494" width="1" height="1" fill="#ff0000"/><rect x="188" y="495" width="1" height="1" fill="#ff0000"/><rect x="189" y="495" width="1" height="1" fill="#ff0000"/><rect x="190" y="495" width="1" height="1" fill="#ff0000"/><rect x="218" y="487" width="1" height="1" fill="#ff0000"/><rect x="219" y="487" width="1" height="1" fill="#ff0000"/><rect x="220" y="487" width="1" height="1" fill="#ff0000"/><rect x="217" y="488" width="1" height="1" fill="#ff0000"/><rect x="221" y="488" width="1" height="1" fill="#ff0000"/><rect x="217" y="489" width="1" height="1" fill="#ff0000"/><rect x="217" y="490" width="1" height="1" fill="#ff0000"/><rect x="217" y="491" width="1" height="1" fill="#ff0000"/><rect x="218" y="491" width="1" height="1" fill="#ff0000"/><rect x="219" y="491" width="1" height="1" fill="#ff0000"/><rect x="220" y="491" width="1" height="1" fill="#ff0000"/><rect x="217" y="492" width="1" height="1" fill="#ff0000"/><rect x="221" y="492" width="1" height="1" fill="#ff0000"/><rect x="217" y="493" width="1" height="1" fill="#ff0000"/><rect x="221" y="493" width="1" height="1" fill="#ff0000"/><rect x="217" y="494" width="1" height="1" fill="#ff0000"/><rect x="221" y="494" width="1" height="1" fill="#ff0000"/><rect x="218" y="495" width="1" height="1" fill="#ff0000"/><rect x="219" y="495" width="1" height="1" fill="#ff0000"/><rect x="220" y="495" width="1" height="1" fill="#ff0000"/><rect x="247" y="487" width="1" height="1" fill="#ff0000"/><rect x="248" y="487" width="1" height="1" fill="#ff0000"/><rect x="249" y="487" width="1" height="1" fill="#ff0000"/><rect x="250" y="487" width="1" height="1" fill="#ff0000"/><rect x="251" y="487" width="1" height="1" fill="#ff0000"/><rect x="251" y="488" width="1" height="1" fill="#ff0000"/><rect x="250" y="489" width="1" height="1" fill="#ff0000"/><rect x="250" y="490" width="1" height="1" fill="#ff0000"/><rect x="249" y="491" width="1" height="1" fill="#ff0000"/><rect x="249" y="492" width="1" height="1" fill="#ff0000"/><rect x="248" y="493" width="1" height="1" fill="#ff0000"/><rect x="248" y="494" width="1" height="1" fill="#ff0000"/><rect x="248" y="495" width="1" height="1" fill="#ff0000"/><rect x="278" y="487" width="1" height="1" fill="#ff0000"/><rect x="279" y="487" width="1" height="1" fill="#ff0000"/><rect x="280" y="487" width="1" height="1" fill="#ff0000"/><rect x="277" y="488" width="1" height="1" fill="#ff0000"/><rect x="281" y="488" width="1" height="1" fill="#ff0000"/><rect x="277" y="489" width="1" height="1" fill="#ff0000"/><rect x="281" y="489" width="1" height="1" fill="#ff0000"/><rect x="277" y="490" width="1" height="1" fill="#ff0000"/><rect x="281" y="490" width="1" height="1" fill="#ff0000"/><rect x="278" y="491" width="1" height="1" fill="#ff0000"/><rect x="279" y="491" width="1" height="1" fill="#ff0000"/><rect x="280" y="491" width="1" height="1" fill="#ff0000"/><rect x="277" y="492" width="1" height="1" fill="#ff0000"/><rect x="281" y="492" width="1" height="1" fill="#ff0000"/><rect x="277" y="493" width="1" height="1" fill="#ff0000"/><rect x="281" y="493" width="1" height="1" fill="#ff0000"/><rect x="277" y="494" width="1" height="1" fill="#ff0000"/><rect x="281" y="494" width="1" height="1" fill="#ff0000"/><rect x="278" y="495" width="1" height="1" fill="#ff0000"/><rect x="279" y="495" width="1" height="1" fill="#ff0000"/><rect x="280" y="495" width="1" height="1" fill="#ff0000"/><rect x="308" y="487" width="1" height="1" fill="#ff0000"/><rect x="309" y="487" width="1" height="1" fill="#ff0000"/><rect x="310" y="487" width="1" height="1" fill="#ff0000"/><rect x="307" y="488" width="1" height="1" fill="#ff0000"/><rect x="311" y="488" width="1" height="1" fill="#ff0000"/><rect x="307" y="489" width="1" height="1" fill="#ff0000"/><rect x="311" y="489" width="1" height="1" fill="#ff0000"/><rect x="307" y="490" width="1" height="1" fill="#ff0000"/><rect x="311" y="490" width="1" height="1" fill="#ff0000"/><rect x="308" y="491" width="1" height="1" fill="#ff0000"/><rect x="309" y="491" width="1" height="1" fill="#ff0000"/><rect x="310" y="491" width="1" height="1" fill="#ff0000"/><rect x="311" y="491" width="1" height="1" fill="#ff0000"/><rect x="311" y="492" width="1" height="1" fill="#ff0000"/><rect x="311" y="493" width="1" height="1" fill="#ff0000"/><rect x="307" y="494" width="1" height="1" fill="#ff0000"/><rect x="311" y="494" width="1" height="1" fill="#ff0000"/><rect x="308" y="495" width="1" height="1" fill="#ff0000"/><rect x="309" y="495" width="1" height="1" fill="#ff0000"/><rect x="310" y="495" width="1" height="1" fill="#ff0000"/><rect x="339" y="487" width="1" height="1" fill="#0000ff"/><rect x="338" y="488" width="1" height="1" fill="#0000ff"/><rect x="339" y="488" width="1" height="1" fill="#0000ff"/><rect x="337" y="489" width="1" height="1" fill="#0000ff"/><rect x="339" y="489" width="1" height="1" fill="#0000ff"/><rect x="339" y="490" width="1" height="1" fill="#0000ff"/><rect x="339" y="491" width="1" height="1" fill="#0000ff"/><rect x="339" y="492" width="1" height="1" fill="#0000ff"/><rect x="339" y="493" width="1" height="1" fill="#0000ff"/><rect x="339" y="494" width="1" height="1" fill="#0000ff"/><rect x="339" y="495" width="1" height="1" fill="#0000ff"/><rect x="344" y="487" width="1" height="1" fill="#0000ff"/><rect x="345" y="487" width="1" height="1" fill="#0000ff"/><rect x="346" y="487" width="1" height="1" fill="#0000ff"/><rect x="343" y="488" width="1" height="1" fill="#0000ff"/><rect x="347" y="488" width="1" height="1" fill="#0000ff"/><rect x="343" y="489" width="1" height="1" fill="#0000ff"/><rect x="347" y="489" width="1" height="1" fill="#0000ff"/><rect x="343" y="490" width="1" height="1" fill="#0000ff"/><rect x="347" y="490" width="1" height="1" fill="#0000ff"/><rect x="343" y="491" width="1" height="1" fill="#0000ff"/><rect x="347" y="491" width="1" height="1" fill="#0000ff"/><rect x="343" y="492" width="1" height="1" fill="#0000ff"/><rect x="347" y="492" width="1" height="1" fill="#0000ff"/><rect x="343" y="493" width="1" height="1" fill="#0000ff"/><rect x="347" y="493" width="1" height="1" fill="#0000ff"/><rect x="343" y="494" width="1" height="1" fill="#0000ff"/><rect x="347" y="494" width="1" height="1" fill="#0000ff"/><rect x="344" y="495" width="1" height="1" fill="#0000ff"/><rect x="345" y="495" width="1" height="1" fill="#0000ff"/><rect x="346" y="495" width="1" height="1" fill="#0000ff"/><rect x="370" y="487" width="1" height="1" fill="#0000ff"/><rect x="369" y="488" width="1" height="1" fill="#0000ff"/><rect x="370" y="488" width="1" height="1" fill="#0000ff"/><rect x="368" y="489" width="1" height="1" fill="#0000ff"/><rect x="370" y="489" width="1" height="1" fill="#0000ff"/><rect x="370" y="490" width="1" height="1" fill="#0000ff"/><rect x="370" y="491" width="1" height="1" fill="#0000ff"/><rect x="370" y="492" width="1" height="1" fill="#0000ff"/><rect x="370" y="493" width="1" height="1" fill="#0000ff"/><rect x="370" y="494" width="1" height="1" fill="#0000ff"/><rect x="370" y="495" width="1" height="1" fill="#0000ff"/><rect x="376" y="487" width="1" height="1" fill="#0000ff"/><rect x="375" y="488" width="1" height="1" fill="#0000ff"/><rect x="376" y="488" width="1" height="1" fill="#0000ff"/><rect x="374" y="489" width="1" height="1" fill="#0000ff"/><rect x="376" y="489" width="1" height="1" fill="#0000ff"/><rect x="376" y="490" width="1" height="1" fill="#0000ff"/><rect x="376" y="491" width="1" height="1" fill="#0000ff"/><rect x="376" y="492" width="1" height="1" fill="#0000ff"/><rect x="376" y="493" width="1" height="1" fill="#0000ff"/><rect x="376" y="494" width="1" height="1" fill="#0000ff"/><rect x="376" y="495" width="1" height="1" fill="#0000ff"/><rect x="400" y="487" width="1" height="1" fill="#8a8a8a"/><rect x="399" y="488" width="1" height="1" fill="#8a8a8a"/><rect x="400" y="488" width="1" height="1" fill="#8a8a8a"/><rect x="398" y="489" width="1" height="1" fill="#8a8a8a"/><rect x="400" y="489" width="1" height="1" fill="#8a8a8a"/><rect x="400" y="490" width="1" height="1" fill="#8a8a8a"/><rect x="400" y="491" width="1" height="1" fill="#8a8a8a"/><rect x="400" y="492" width="1" height="1" fill="#8a8a8a"/><rect x="400" y="493" width="1" height="1" fill="#8a8a8a"/><rect x="400" y="494" width="1" height="1" fill="#8a8a8a"/><rect x="400" y="495" width="1" height="1" fill="#8a8a8a"/><rect x="405" y="487" width="1" height="1" fill="#8a8a8a"/><rect x="406" y="487" width="1" height="1" fill="#8a8a8a"/><rect x="407" y="487" width="1" height="1" fill="#8a8a8a"/><rect x="404" y="488" width="1" height="1" fill="#8a8a8a"/><rect x="408" y="488" width="1" height="1" fill="#8a8a8a"/><rect x="408" y="489" width="1" height="1" fill="#8a8a8a"/><rect x="407" y="490" width="1" height="1" fill="#8a8a8a"/><rect x="406" y="491" width="1" height="1" fill="#8a8a8a"/><rect x="405" y="492" width="1" height="1" fill="#8a8a8a"/><rect x="404" y="493" width="1" height="1" fill="#8a8a8a"/><rect x="404" y="494" width="1" height="1" fill="#8a8a8a"/><rect x="404" y="495" width="1" height="1" fill="#8a8a8a"/><rect x="405" y="495" width="1" height="1" fill="#8a8a8a"/><rect x="406" y="495" width="1" height="1" fill="#8a8a8a"/><rect x="407" y="495" width="1" height="1" fill="#8a8a8a"/><rect x="408" y="495" width="1" height="1" fill="#8a8a8a"/><rect x="430" y="487" width="1" height="1" fill="#8a8a8a"/><rect x="429" y="488" width="1" height="1" fill="#8a8a8a"/><rect x="430" y="488" width="1" height="1" fill="#8a8a8a"/><rect x="428" y="489" width="1" height="1" fill="#8a8a8a"/><rect x="430" y="489" width="1" height="1" fill="#8a8a8a"/><rect x="430" y="490" width="1" height="1" fill="#8a8a8a"/><rect x="430" y="491" width="1" height="1" fill="#8a8a8a"/><rect x="430" y="492" width="1" height="1" fill="#8a8a8a"/><rect x="430" y="493" width="1" height="1" fill="#8a8a8a"/><rect x="430" y="494" width="1" height="1" fill="#8a8a8a"/><rect x="430" y="495" width="1" height="1" fill="#8a8a8a"/><rect x="435" y="487" width="1" height="1" fill="#8a8a8a"/><rect x="436" y="487" width="1" height="1" fill="#8a8a8a"/><rect x="437" y="487" width="1" height="1" fill="#8a8a8a"/><rect x="434" y="488" width="1" height="1" fill="#8a8a8a"/><rect x="438" y="488" width="1" height="1" fill="#8a8a8a"/><rect x="438" y="489" width="1" height="1" fill="#8a8a8a"/><rect x="438" y="490" width="1" height="1" fill="#8a8a8a"/><rect x="436" y="491" width="1" height="1" fill="#8a8a8a"/><rect x="437" y="491" width="1" height="1" fill="#8a8a8a"/><rect x="438" y="492" width="1" height="1" fill="#8a8a8a"/><rect x="438" y="493" width="1" height="1" fill="#8a8a8a"/><rect x="434" y="494" width="1" height="1" fill="#8a8a8a"/><rect x="438" y="494" width="1" height="1" fill="#8a8a8a"/><rect x="435" y="495" width="1" height="1" fill="#8a8a8a"/><rect x="436" y="495" width="1" height="1" fill="#8a8a8a"/><rect x="437" y="495" width="1" height="1" fill="#8a8a8a"/><rect x="460" y="487" width="1" height="1" fill="#ff0000"/><rect x="459" y="488" width="1" height="1" fill="#ff0000"/><rect x="460" y="488" width="1" height="1" fill="#ff0000"/><rect x="458" y="489" width="1" height="1" fill="#ff0000"/><rect x="460" y="489" width="1" height="1" fill="#ff0000"/><rect x="460" y="490" width="1" height="1" fill="#ff0000"/><rect x="460" y="491" width="1" height="1" fill="#ff0000"/><rect x="460" y="492" width="1" height="1" fill="#ff0000"/><rect x="460" y="493" width="1" height="1" fill="#ff0000"/><rect x="460" y="494" width="1" height="1" fill="#ff0000"/><rect x="460" y="495" width="1" height="1" fill="#ff0000"/><rect x="467" y="487" width="1" height="1" fill="#ff0000"/><rect x="466" y="488" width="1" height="1" fill="#ff0000"/><rect x="467" y="488" width="1" height="1" fill="#ff0000"/><rect x="466" y="489" width="1" height="1" fill="#ff0000"/><rect x="467" y="489" width="1" height="1" fill="#ff0000"/><rect x="465" y="490" width="1" height="1" fill="#ff0000"/><rect x="467" y="490" width="1" height="1" fill="#ff0000"/><rect x="465" y="491" width="1" height="1" fill="#ff0000"/><rect x="467" y="491" width="1" height="1" fill="#ff0000"/><rect x="464" y="492" width="1" height="1" fill="#ff0000"/><rect x="467" y="492" width="1" height="1" fill="#ff0000"/><rect x="464" y="493" width="1" height="1" fill="#ff0000"/><rect x="465" y="493" width="1" height="1" fill="#ff0000"/><rect x="466" y="493" width="1" height="1" fill="#ff0000"/><rect x="467" y="493" width="1" height="1" fill="#ff0000"/><rect x="468" y="493" width="1" height="1" fill="#ff0000"/><rect x="467" y="494" width="1" height="1" fill="#ff0000"/><rect x="467" y="495" width="1" height="1" fill="#ff0000"/><rect x="490" y="487" width="1" height="1" fill="#ff0000"/><rect x="489" y="488" width="1" height="1" fill="#ff0000"/><rect x="490" y="488" width="1" height="1" fill="#ff0000"/><rect x="488" y="489" width="1" height="1" fill="#ff0000"/><rect x="490" y="489" width="1" height="1" fill="#ff0000"/><rect x="490" y="490" width="1" height="1" fill="#ff0000"/><rect x="490" y="491" width="1" height="1" fill="#ff0000"/><rect x="490" y="492" width="1" height="1" fill="#ff0000"/><rect x="490" y="493" width="1" height="1" fill="#ff0000"/><rect x="490" y="494" width="1" height="1" fill="#ff0000"/><rect x="490" y="495" width="1" height="1" fill="#ff0000"/><rect x="494" y="487" width="1" height="1" fill="#ff0000"/><rect x="495" y="487" width="1" height="1" fill="#ff0000"/><rect x="496" y="487" width="1" height="1" fill="#ff0000"/><rect x="497" y="487" width="1" height="1" fill="#ff0000"/><rect x="498" y="487" width="1" height="1" fill="#ff0000"/><rect x="494" y="488" width="1" height="1" fill="#ff0000"/><rect x="494" y="489" width="1" height="1" fill="#ff0000"/><rect x="494" y="490" width="1" height="1" fill="#ff0000"/><rect x="495" y="490" width="1" height="1" fill="#ff0000"/><rect x="496" y="490" width="1" height="1" fill="#ff0000"/><rect x="497" y="490" width="1" height="1" fill="#ff0000"/><rect x="498" y="491" width="1" height="1" fill="#ff0000"/><rect x="498" y="492" width="1" height="1" fill="#ff0000"/><rect x="498" y="493" width="1" height="1" fill="#ff0000"/><rect x="494" y="494" width="1" height="1" fill="#ff0000"/><rect x="498" y="494" width="1" height="1" fill="#ff0000"/><rect x="495" y="495" width="1" height="1" fill="#ff0000"/><rect x="496" y="495" width="1" height="1" fill="#ff0000"/><rect x="497" y="495" width="1" height="1" fill="#ff0000"/><rect x="520" y="487" width="1" height="1" fill="#ff0000"/><rect x="519" y="488" width="1" height="1" fill="#ff0000"/><rect x="520" y="488" width="1" height="1" fill="#ff0000"/><rect x="518" y="489" width="1" height="1" fill="#ff0000"/><rect x="520" y="489" width="1" height="1" fill="#ff0000"/><rect x="520" y="490" width="1" height="1" fill="#ff0000"/><rect x="520" y="491" width="1" height="1" fill="#ff0000"/><rect x="520" y="492" width="1" height="1" fill="#ff0000"/><rect x="520" y="493" width="1" height="1" fill="#ff0000"/><rect x="520" y="494" width="1" height="1" fill="#ff0000"/><rect x="520" y="495" width="1" height="1" fill="#ff0000"/><rect x="525" y="487" width="1" height="1" fill="#ff0000"/><rect x="526" y="487" width="1" height="1" fill="#ff0000"/><rect x="527" y="487" width="1" height="1" fill="#ff0000"/><rect x="524" y="488" width="1" height="1" fill="#ff0000"/><rect x="528" y="488" width="1" height="1" fill="#ff0000"/><rect x="524" y="489" width="1" height="1" fill="#ff0000"/><rect x="524" y="490" width="1" height="1" fill="#ff0000"/><rect x="524" y="491" width="1" height="1" fill="#ff0000"/><rect x="525" y="491" width="1" height="1" fill="#ff0000"/><rect x="526" y="491" width="1" height="1" fill="#ff0000"/><rect x="527" y="491" width="1" height="1" fill="#ff0000"/><rect x="524" y="492" width="1" height="1" fill="#ff0000"/><rect x="528" y="492" width="1" height="1" fill="#ff0000"/><rect x="524" y="493" width="1" height="1" fill="#ff0000"/><rect x="528" y="493" width="1" height="1" fill="#ff0000"/><rect x="524" y="494" width="1" height="1" fill="#ff0000"/><rect x="528" y="494" width="1" height="1" fill="#ff0000"/><rect x="525" y="495" width="1" height="1" fill="#ff0000"/><rect x="526" y="495" width="1" height="1" fill="#ff0000"/><rect x="527" y="495" width="1" height="1" fill="#ff0000"/><rect x="550" y="487" width="1" height="1" fill="#ff0000"/><rect x="549" y="488" width="1" height="1" fill="#ff0000"/><rect x="550" y="488" width="1" height="1" fill="#ff0000"/><rect x="548" y="489" width="1" height="1" fill="#ff0000"/><rect x="550" y="489" width="1" height="1" fill="#ff0000"/><rect x="550" y="490" width="1" height="1" fill="#ff0000"/><rect x="550" y="491" width="1" height="1" fill="#ff0000"/><rect x="550" y="492" width="1" height="1" fill="#ff0000"/><rect x="550" y="493" width="1" height="1" fill="#ff0000"/><rect x="550" y="494" width="1" height="1" fill="#ff0000"/><rect x="550" y="495" width="1" height="1" fill="#ff0000"/><rect x="554" y="487" width="1" height="1" fill="#ff0000"/><rect x="555" y="487" width="1" height="1" fill="#ff0000"/><rect x="556" y="487" width="1" height="1" fill="#ff0000"/><rect x="557" y="487" width="1" height="1" fill="#ff0000"/><rect x="558" y="487" width="1" height="1" fill="#ff0000"/><rect x="558" y="488" width="1" height="1" fill="#ff0000"/><rect x="557" y="489" width="1" height="1" fill="#ff0000"/><rect x="557" y="490" width="1" height="1" fill="#ff0000"/><rect x="556" y="491" width="1" height="1" fill="#ff0000"/><rect x="556" y="492" width="1" height="1" fill="#ff0000"/><rect x="555" y="493" width="1" height="1" fill="#ff0000"/><rect x="555" y="494" width="1" height="1" fill="#ff0000"/><rect x="555" y="495" width="1" height="1" fill="#ff0000"/><rect x="580" y="487" width="1" height="1" fill="#ff0000"/><rect x="579" y="488" width="1" height="1" fill="#ff0000"/><rect x="580" y="488" width="1" height="1" fill="#ff0000"/><rect x="578" y="489" width="1" height="1" fill="#ff0000"/><rect x="580" y="489" width="1" height="1" fill="#ff0000"/><rect x="580" y="490" width="1" height="1" fill="#ff0000"/><rect x="580" y="491" width="1" height="1" fill="#ff0000"/><rect x="580" y="492" width="1" height="1" fill="#ff0000"/><rect x="580" y="493" width="1" height="1" fill="#ff0000"/><rect x="580" y="494" width="1" height="1" fill="#ff0000"/><rect x="580" y="495" width="1" height="1" fill="#ff0000"/><rect x="585" y="487" width="1" height="1" fill="#ff0000"/><rect x="586" y="487" width="1" height="1" fill="#ff0000"/><rect x="587" y="487" width="1" height="1" fill="#ff0000"/><rect x="584" y="488" width="1" height="1" fill="#ff0000"/><rect x="588" y="488" width="1" height="1" fill="#ff0000"/><rect x="584" y="489" width="1" height="1" fill="#ff0000"/><rect x="588" y="489" width="1" height="1" fill="#ff0000"/><rect x="584" y="490" width="1" height="1" fill="#ff0000"/><rect x="588" y="490" width="1" height="1" fill="#ff0000"/><rect x="585" y="491" width="1" height="1" fill="#ff0000"/><rect x="586" y="491" width="1" height="1" fill="#ff0000"/><rect x="587" y="491" width="1" height="1" fill="#ff0000"/><rect x="584" y="492" width="1" height="1" fill="#ff0000"/><rect x="588" y="492" width="1" height="1" fill="#ff0000"/><rect x="584" y="493" width="1" height="1" fill="#ff0000"/><rect x="588" y="493" width="1" height="1" fill="#ff0000"/><rect x="584" y="494" width="1" height="1" fill="#ff0000"/><rect x="588" y="494" width="1" height="1" fill="#ff0000"/><rect x="585" y="495" width="1" height="1" fill="#ff0000"/><rect x="586" y="495" width="1" height="1" fill="#ff0000"/><rect x="587" y="495" width="1" height="1" fill="#ff0000"/><rect x="610" y="487" width="1" height="1" fill="#ff0000"/><rect x="609" y="488" width="1" height="1" fill="#ff0000"/><rect x="610" y="488" width="1" height="1" fill="#ff0000"/><rect x="608" y="489" width="1" height="1" fill="#ff0000"/><rect x="610" y="489" width="1" height="1" fill="#ff0000"/><rect x="610" y="490" width="1" height="1" fill="#ff0000"/><rect x="610" y="491" width="1" height="1" fill="#ff0000"/><rect x="610" y="492" width="1" height="1" fill="#ff0000"/><rect x="610" y="493" width="1" height="1" fill="#ff0000"/><rect x="610" y="494" width="1" height="1" fill="#ff0000"/><rect x="610" y="495" width="1" height="1" fill="#ff0000"/><rect x="615" y="487" width="1" height="1" fill="#ff0000"/><rect x="616" y="487" width="1" height="1" fill="#ff0000"/><rect x="617" y="487" width="1" height="1" fill="#ff0000"/><rect x="614" y="488" width="1" height="1" fill="#ff0000"/><rect x="618" y="488" width="1" height="1" fill="#ff0000"/><rect x="614" y="489" width="1" height="1" fill="#ff0000"/><rect x="618" y="489" width="1" height="1" fill="#ff0000"/><rect x="614" y="490" width="1" height="1" fill="#ff0000"/><rect x="618" y="490" width="1" height="1" fill="#ff0000"/><rect x="615" y="491" width="1" height="1" fill="#ff0000"/><rect x="616" y="491" width="1" height="1" fill="#ff0000"/><rect x="617" y="491" width="1" height="1" fill="#ff0000"/><rect x="618" y="491" width="1" height="1" fill="#ff0000"/><rect x="618" y="492" width="1" height="1" fill="#ff0000"/><rect x="618" y="493" width="1" height="1" fill="#ff0000"/><rect x="614" y="494" width="1" height="1" fill="#ff0000"/><rect x="618" y="494" width="1" height="1" fill="#ff0000"/><rect x="615" y="495" width="1" height="1" fill="#ff0000"/><rect x="616" y="495" width="1" height="1" fill="#ff0000"/><rect x="617" y="495" width="1" height="1" fill="#ff0000"/><rect x="20" y="502" width="1" height="1" fill="#8a8a8a"/><rect x="21" y="502" width="1" height="1" fill="#8a8a8a"/><rect x="22" y="502" width="1" height="1" fill="#8a8a8a"/><rect x="19" y="503" width="1" height="1" fill="#8a8a8a"/><rect x="23" y="503" width="1" height="1" fill="#8a8a8a"/><rect x="23" y="504" width="1" height="1" fill="#8a8a8a"/><rect x="22" y="505" width="1" height="1" fill="#8a8a8a"/><rect x="21" y="506" width="1" height="1" fill="#8a8a8a"/><rect x="20" y="507" width="1" height="1" fill="#8a8a8a"/><rect x="19" y="508" width="1" height="1" fill="#8a8a8a"/><rect x="19" y="509" width="1" height="1" fill="#8a8a8a"/><rect x="19" y="510" width="1" height="1" fill="#8a8a8a"/><rect x="20" y="510" width="1" height="1" fill="#8a8a8a"/><rect x="21" y="510" width="1" height="1" fill="#8a8a8a"/><rect x="22" y="510" width="1" height="1" fill="#8a8a8a"/><rect x="23" y="510" width="1" height="1" fill="#8a8a8a"/><rect x="28" y="502" width="1" height="1" fill="#8a8a8a"/><rect x="27" y="503" width="1" height="1" fill="#8a8a8a"/><rect x="28" y="503" width="1" height="1" fill="#8a8a8a"/><rect x="27" y="504" width="1" height="1" fill="#8a8a8a"/><rect x="28" y="504" width="1" height="1" fill="#8a8a8a"/><rect x="26" y="505" width="1" height="1" fill="#8a8a8a"/><rect x="28" y="505" width="1" height="1" fill="#8a8a8a"/><rect x="26" y="506" width="1" height="1" fill="#8a8a8a"/><rect x="28" y="506" width="1" height="1" fill="#8a8a8a"/><rect x="25" y="507" width="1" height="1" fill="#8a8a8a"/><rect x="28" y="507" width="1" height="1" fill="#8a8a8a"/><rect x="25" y="508" width="1" height="1" fill="#8a8a8a"/><rect x="26" y="508" width="1" height="1" fill="#8a8a8a"/><rect x="27" y="508" width="1" height="1" fill="#8a8a8a"/><rect x="28" y="508" width="1" height="1" fill="#8a8a8a"/><rect x="29" y="508" width="1" height="1" fill="#8a8a8a"/><rect x="28" y="509" width="1" height="1" fill="#8a8a8a"/><rect x="28" y="510" width="1" height="1" fill="#8a8a8a"/><rect x="26" y="611" width="1" height="1" fill="#8a8a8a"/><rect x="27" y="611" width="1" height="1" fill="#8a8a8a"/><rect x="28" y="611" width="1" height="1" fill="#8a8a8a"/><rect x="25" y="612" width="1" height="1" fill="#8a8a8a"/><rect x="29" y="612" width="1" height="1" fill="#8a8a8a"/><rect x="25" y="613" width="1" height="1" fill="#8a8a8a"/><rect x="29" y="613" width="1" height="1" fill="#8a8a8a"/><rect x="25" y="614" width="1" height="1" fill="#8a8a8a"/><rect x="29" y="614" width="1" height="1" fill="#8a8a8a"/><rect x="25" y="615" width="1" height="1" fill="#8a8a8a"/><rect x="29" y="615" width="1" height="1" fill="#8a8a8a"/><rect x="25" y="616" width="1" height="1" fill="#8a8a8a"/><rect x="29" y="616" width="1" height="1" fill="#8a8a8a"/><rect x="25" y="617" width="1" height="1" fill="#8a8a8a"/><rect x="29" y="617" width="1" height="1" fill="#8a8a8a"/><rect x="25" y="618" width="1" height="1" fill="#8a8a8a"/><rect x="29" y="618" width="1" height="1" fill="#8a8a8a"/><rect x="26" y="619" width="1" height="1" fill="#8a8a8a"/><rect x="27" y="619" width="1" height="1" fill="#8a8a8a"/><rect x="28" y="619" width="1" height="1" fill="#8a8a8a"/></svg>
</body></html>
